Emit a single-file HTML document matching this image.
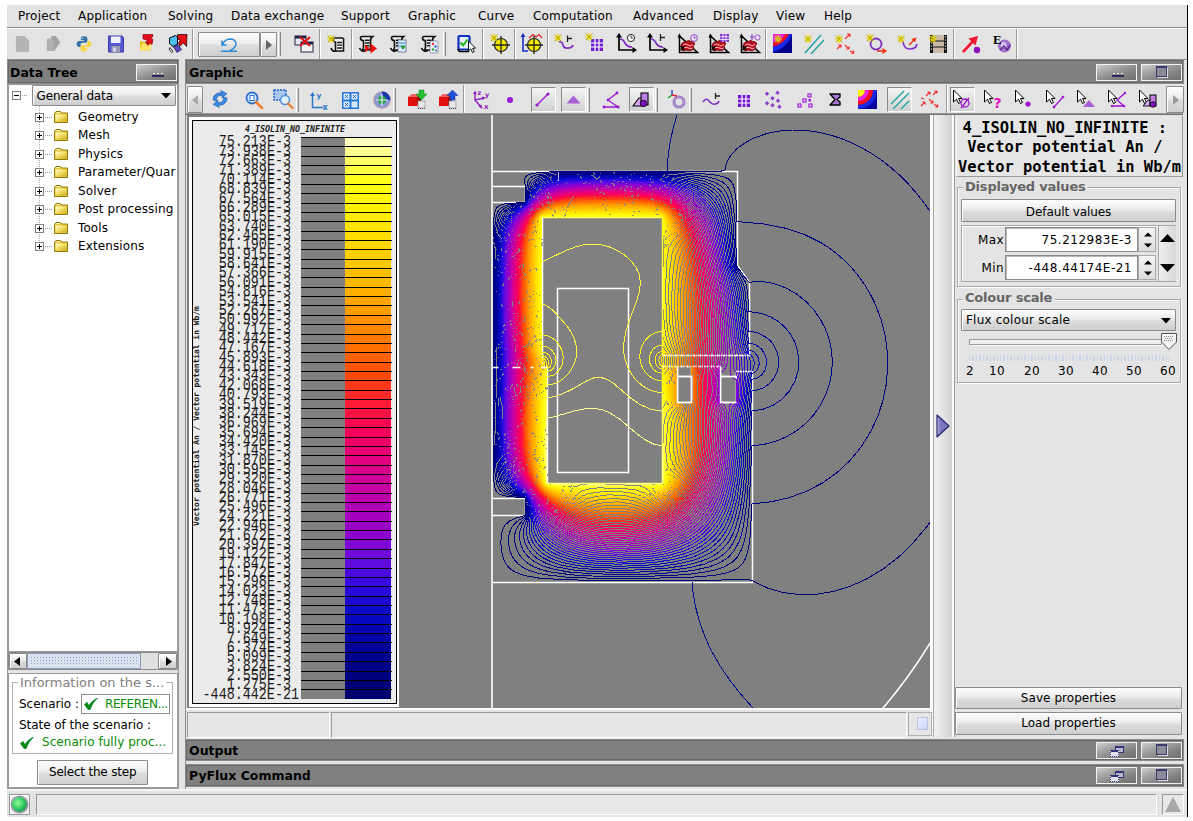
<!DOCTYPE html>
<html lang="en"><head><meta charset="utf-8"><title>Flux</title>
<style>
*{box-sizing:border-box;margin:0;padding:0}
html,body{width:1193px;height:821px;overflow:hidden;background:#fff}
body{position:relative;font-family:"DejaVu Sans","Liberation Sans",sans-serif;font-size:12px;color:#000;-webkit-font-smoothing:antialiased}
.a{position:absolute}
.t{position:absolute;white-space:nowrap;line-height:14px}
.b{font-weight:bold}
#app{position:absolute;left:7px;top:5px;width:1180px;height:812px;background:#e3e3e3}
.hdr{position:absolute;background:#808080;border:1px solid #696969;box-shadow:0 0 0 1px #8c8c8c}
.hdr .t{font-weight:bold;font-size:12.5px;line-height:16px}
.btn{position:absolute;border:1px solid #8a8a8a;border-radius:1px;background:linear-gradient(#fdfdfd 0%,#ececec 45%,#dcdcdc 55%,#cfcfcf 100%);box-shadow:inset 1px 1px 0 #fff}
.hbtn{position:absolute;border:1px solid #f2f2f2;background:linear-gradient(160deg,#cecece 0%,#a2a2a2 35%,#808080 70%,#6e6e6e 100%)}
.fld{position:absolute;background:#fff;border:1px solid #8a8a8a;box-shadow:inset 1px 1px 0 #b8b8b8}
.sep{position:absolute;width:2px;border-left:1px solid #9a9a9a;border-right:1px solid #fff}
</style></head>
<body>
<div id="app"></div>
<div class="a" style="left:7px;top:59px;width:172px;height:730px;border:1px solid #9a9a9a;background:#e4e4e4"></div>
<div class="a" style="left:185px;top:59px;width:1002px;height:730px;border:1px solid #8a8a8a;border-bottom:none;border-right:none;background:#e4e4e4"></div>
<div class="a" style="left:7px;top:789px;width:1180px;height:2px;background:#f4f4f4"></div>
<div class="a" style="left:7px;top:5px;width:1180px;height:23px;background:#e3e3e3"></div>
<div class="a" style="left:1187px;top:5px;width:1px;height:812px;background:#000"></div>
<div class="a" style="left:7px;top:27px;width:1180px;height:1px;background:#8a8a8a"></div>
<div class="a" style="left:7px;top:28px;width:1180px;height:1px;background:#fbfbfb"></div>
<div class="t" style="left:18px;top:9px;letter-spacing:0.2px">Project</div>
<div class="t" style="left:78px;top:9px;letter-spacing:0.2px">Application</div>
<div class="t" style="left:168px;top:9px;letter-spacing:0.2px">Solving</div>
<div class="t" style="left:231px;top:9px;letter-spacing:0.2px">Data exchange</div>
<div class="t" style="left:341px;top:9px;letter-spacing:0.2px">Support</div>
<div class="t" style="left:408px;top:9px;letter-spacing:0.2px">Graphic</div>
<div class="t" style="left:478px;top:9px;letter-spacing:0.2px">Curve</div>
<div class="t" style="left:533px;top:9px;letter-spacing:0.2px">Computation</div>
<div class="t" style="left:633px;top:9px;letter-spacing:0.2px">Advanced</div>
<div class="t" style="left:713px;top:9px;letter-spacing:0.2px">Display</div>
<div class="t" style="left:776px;top:9px;letter-spacing:0.2px">View</div>
<div class="t" style="left:824px;top:9px;letter-spacing:0.2px">Help</div>
<div class="a" style="left:7px;top:29px;width:1180px;height:30px;background:#e3e3e3"></div>
<svg class="a" style="left:14px;top:34px" width="17" height="20" viewBox="0 0 18 21"><path d="M2 3.5Q2 2 3.5 2H11L16 7V17.5Q16 19 14.5 19H3.5Q2 19 2 17.5Z" fill="#b4b4b4"/></svg>
<svg class="a" style="left:45px;top:34px" width="17" height="19" viewBox="0 0 19 21"><path d="M2 6V19H11V8L8 5H3Z" fill="#b0b0b0"/><path d="M7 2H12L17 9L12 17H10V9L7 6Z" fill="#a4a4a4"/></svg>
<svg class="a" style="left:75px;top:35px" width="18" height="18" viewBox="0 0 20 21"><path d="M9.8 1.5C6.5 1.5 6.3 3 6.3 4V6.2H10V7H4.3C2.5 7 1.5 8.5 1.5 10.5S2.5 14 4.3 14H6V11.5C6 10 7 9 8.5 9H12C13.2 9 14 8.2 14 7V4C14 2.5 12.5 1.5 9.8 1.5Z" fill="#3872a4"/><circle cx="8" cy="3.8" r="0.8" fill="#fff"/><path d="M10.2 19.5C13.5 19.5 13.7 18 13.7 17V14.8H10V14H15.7C17.5 14 18.5 12.5 18.5 10.5S17.5 7 15.7 7H14V9.5C14 11 13 12 11.5 12H8C6.8 12 6 12.8 6 14V17C6 18.5 7.5 19.5 10.2 19.5Z" fill="#f6d545"/><circle cx="12" cy="17.2" r="0.8" fill="#fff"/></svg>
<svg class="a" style="left:107px;top:35px" width="18" height="18" viewBox="1 1 17 18"><path d="M2 2H15.5L17 3.5V18H2Z" fill="#5858d0" stroke="#3a3aa8" stroke-width="1"/><rect x="4.5" y="2.5" width="9.5" height="6.5" fill="#f0f0f8"/><rect x="5" y="12" width="8.5" height="6" fill="#9a9ab0"/><rect x="6.5" y="13.5" width="3" height="4" fill="#d8d8e8"/></svg>
<svg class="a" style="left:139px;top:34px" width="15" height="17" viewBox="0 0 14 17"><path d="M0.500 7.500H5L6.500 9.500H11V16.500H0.500Z" fill="#e8c020"/><path d="M0.500 16.500L2.500 9.500H12.500L10.500 16.500Z" fill="#fbe66a"/><path d="M3.500 0.500H13.500L13 3L11 4L13.500 5.500L12.500 10.500L10.500 9L8.500 11.500L6 8L8.500 6.500L3.500 5Z" fill="#e60a14" stroke="#7a0008" stroke-width="0.600"/></svg>
<svg class="a" style="left:168px;top:34px" width="20" height="19" viewBox="0 0 20 19"><path d="M1.500 4L7.500 1.500L9.500 3V10L5 12.500L1.500 9.500Z" fill="#4cc0f4" stroke="#000" stroke-width="1"/><path d="M5.500 13L10 10.500L13.500 15.500L9 18.500Z" fill="#5a48c0" stroke="#1a1a50" stroke-width="0.700"/><path d="M2 13.500L5 17.500L3.500 18.500L1 15Z" fill="#fff" stroke="#000" stroke-width="0.800"/><path d="M9.500 0.500H19L18.500 12.500L15.500 9L12 12L10.500 9L12.500 6L9.500 5Z" fill="#ea0a14" stroke="#000" stroke-width="0.700"/><path d="M15 10.500L17.500 14" stroke="#fff" stroke-width="1.200"/></svg>
<div class="sep" style="left:192px;top:29px;width:2px;height:30px;"></div>
<div class="btn" style="left:198px;top:32px;width:62px;height:25px;"></div>
<svg class="a" style="left:221px;top:38px" width="17" height="15" viewBox="0 0 17 15"><path d="M1 2.5V7H5.5M1.2 6.8Q4 1 9.5 1Q15 1.5 15 6Q14.500 10 9 12.500M0 13.300H16" fill="none" stroke="#2a8ad8" stroke-width="1.5"/></svg>
<div class="btn" style="left:260px;top:32px;width:17px;height:25px;"><svg class="a" style="left:5px;top:7px" width="6" height="10"><path d="M0 0V10L6 5Z" fill="#666"/></svg></div>
<div class="a" style="left:278px;top:32px;width:3px;height:24px;border-left:1px solid #fff;border-right:1px solid #8a8a8a;background:#d0d0d0"></div>
<svg class="a" style="left:294px;top:34px" width="20" height="19" viewBox="0 0 20 19"><rect x="1" y="2" width="11" height="9" fill="#e8e8f0" stroke="#224" stroke-width="1"/><rect x="1" y="2" width="11" height="2.5" fill="#224"/><rect x="7" y="8" width="12" height="10" fill="#f4f4f8" stroke="#224" stroke-width="1"/><rect x="7" y="8" width="12" height="2.5" fill="#224"/><path d="M6 3L16 12M16 3L6 12" stroke="#e01010" stroke-width="2"/></svg>
<div class="sep" style="left:319px;top:29px;width:2px;height:30px;"></div>
<svg class="a" style="left:326px;top:33px" width="20" height="20" viewBox="0 0 20 20"><path d="M9 5H16Q18.500 5.500 17.500 8V18H9.500V9Q7 9 7.500 6.500Q8 5 9 5Z" fill="#f4f4f4" stroke="#111" stroke-width="1.600"/><path d="M11 9.500H16M11 12.200H16M11 15H16" stroke="#111" stroke-width="1.300"/><path d="M5 15Q6 19 10 18" fill="none" stroke="#111" stroke-width="1.600"/><g stroke="#e8d800" stroke-width="1.2"><path d="M5 6m-4 0h8m-4 -4v8m-3 -7l6 6m0 -6l-6 6"/></g><g stroke="#555" stroke-width="0.6"><path d="M5 6m-3.5 -3.5l7 7m0 -7l-7 7" stroke-dasharray="1 1"/></g></svg>
<div class="sep" style="left:351px;top:29px;width:2px;height:30px;"></div>
<svg class="a" style="left:357px;top:34px" width="22" height="20" viewBox="0 0 22 20"><path d="M5 2.500H15.500Q13.500 4 13.500 6.500V16H5.500Q7 14 6.500 12V6.500Q4 6.500 3.500 4.500Q3.500 2.500 5 2.500Z" fill="#f4f4f4" stroke="#111" stroke-width="1.700"/><path d="M8 6.200H12.500M8 9H12.500M8 11.800H12.500" stroke="#111" stroke-width="1.400"/><path d="M2.500 14Q4.500 18.500 9 16.500" fill="none" stroke="#111" stroke-width="1.700"/><path d="M8 10.5L13 14.5L8 18.5Z" fill="#e81010"/><path d="M13.5 9.5L20 14.5L13.5 19.5Z" fill="#e81010"/></svg>
<svg class="a" style="left:388px;top:34px" width="20" height="20" viewBox="0 0 20 20"><path d="M5 2.500H15.500Q13.500 4 13.500 6.500V16H5.500Q7 14 6.500 12V6.500Q4 6.500 3.500 4.500Q3.500 2.500 5 2.500Z" fill="#f4f4f4" stroke="#111" stroke-width="1.700"/><path d="M8 6.200H12.500M8 9H12.500M8 11.800H12.500" stroke="#111" stroke-width="1.400"/><path d="M2.500 14Q4.500 18.500 9 16.500" fill="none" stroke="#111" stroke-width="1.700"/><rect x="10" y="6" width="8" height="12" fill="#d8e8ff" stroke="#446" stroke-width="0.6"/><path d="M11 9h6M11 12h6" stroke="#28a" stroke-width="1.2"/><path d="M13 12L15 15L17 12" fill="#2a2" stroke="#181" stroke-width="1"/></svg>
<svg class="a" style="left:419px;top:34px" width="22" height="20" viewBox="0 0 22 20"><path d="M5 2.500H15.500Q13.500 4 13.500 6.500V16H5.500Q7 14 6.500 12V6.500Q4 6.500 3.500 4.500Q3.500 2.500 5 2.500Z" fill="#f4f4f4" stroke="#111" stroke-width="1.700"/><path d="M8 6.200H12.500M8 9H12.500M8 11.800H12.500" stroke="#111" stroke-width="1.400"/><path d="M2.500 14Q4.500 18.500 9 16.500" fill="none" stroke="#111" stroke-width="1.700"/><rect x="11" y="7" width="8" height="12" rx="1.5" fill="#e8eef8" stroke="#668" stroke-width="0.6"/><circle cx="14" cy="10" r="1.2" fill="#e33"/><circle cx="16.5" cy="12.5" r="1.2" fill="#36c"/><circle cx="14" cy="15.5" r="1.2" fill="#2a2"/><circle cx="17" cy="16.5" r="1" fill="#36c"/></svg>
<div class="a" style="left:443px;top:32px;width:3px;height:24px;border-left:1px solid #fff;border-right:1px solid #8a8a8a;background:#d0d0d0"></div>
<svg class="a" style="left:457px;top:34px" width="20" height="20" viewBox="0 0 20 20"><rect x="1.500" y="2" width="11" height="13.500" rx="1" fill="#e8f0ff" stroke="#1030c0" stroke-width="2.200"/><path d="M0.500 15L2.500 17.500H12" stroke="#000" stroke-width="1.600" fill="none"/><path d="M3.500 8.500L6 11.500L10.500 5.500" fill="none" stroke="#18b818" stroke-width="2"/><path d="M11.500 7V17L13.800 14.800L15.500 18.500L17.300 17.700L15.600 14.200H18.500Z" fill="#fff" stroke="#000" stroke-width="0.900"/></svg>
<div class="sep" style="left:482px;top:29px;width:2px;height:30px;"></div>
<svg class="a" style="left:489px;top:33px" width="21" height="21" viewBox="0 0 21 21"><circle cx="12" cy="12" r="6.5" fill="#f4e800" stroke="#222" stroke-width="1.2"/><path d="M12 12m-9 0h18m-9 -9v18" stroke="#222" stroke-width="1.3"/><path d="M12 12m-6.5 0a6.5 6.5 0 0 1 6.5 -6.5v6.5z" fill="#222" opacity="0.0"/><g stroke="#e8d800" stroke-width="1.2"><path d="M5 5m-4 0h8m-4 -4v8m-3 -7l6 6m0 -6l-6 6"/></g><g stroke="#555" stroke-width="0.6"><path d="M5 5m-3.5 -3.5l7 7m0 -7l-7 7" stroke-dasharray="1 1"/></g></svg>
<div class="sep" style="left:514px;top:29px;width:2px;height:30px;"></div>
<svg class="a" style="left:520px;top:33px" width="23" height="21" viewBox="0 0 23 21"><path d="M3 3V18H8" fill="none" stroke="#1830c0" stroke-width="1.6"/><path d="M3 0L0.5 4H5.5Z" fill="#1830c0"/><path d="M9 5L13 1.5L16 4L19 1.5L22 5" fill="none" stroke="#e02020" stroke-width="1.2"/><circle cx="14" cy="12" r="6.5" fill="#f4e800" stroke="#222" stroke-width="1.2"/><path d="M14 12m-9 0h18m-9 -9v18" stroke="#222" stroke-width="1.3"/><path d="M14 12m-6.5 0a6.5 6.5 0 0 1 6.5 -6.5v6.5z" fill="#222" opacity="0.0"/></svg>
<div class="sep" style="left:547px;top:29px;width:2px;height:30px;"></div>
<svg class="a" style="left:553px;top:33px" width="21" height="20" viewBox="0 0 21 20"><path d="M6 9Q9 8 10 12T16 15Q19 15 20 12" fill="none" stroke="#8030c0" stroke-width="1.7"/><path d="M14.500 2.500V9M14.500 5.500H19" stroke="#222" stroke-width="1.300" fill="none"/><g stroke="#e8d800" stroke-width="1.2"><path d="M5 5m-4 0h8m-4 -4v8m-3 -7l6 6m0 -6l-6 6"/></g><g stroke="#555" stroke-width="0.6"><path d="M5 5m-3.5 -3.5l7 7m0 -7l-7 7" stroke-dasharray="1 1"/></g></svg>
<svg class="a" style="left:584px;top:33px" width="19" height="19" viewBox="0 0 19 19"><rect x="7" y="6" width="12" height="12" fill="#7020d0"/><path d="M11 6V18M15 6V18M7 10H19M7 14H19" stroke="#fff" stroke-width="1.2"/><g stroke="#e8d800" stroke-width="1.2"><path d="M5 4m-4 0h8m-4 -4v8m-3 -7l6 6m0 -6l-6 6"/></g><g stroke="#555" stroke-width="0.6"><path d="M5 4m-3.5 -3.5l7 7m0 -7l-7 7" stroke-dasharray="1 1"/></g></svg>
<svg class="a" style="left:615px;top:33px" width="23" height="21" viewBox="0 0 23 21"><path d="M4 3V17H19" fill="none" stroke="#000" stroke-width="1.7"/><path d="M4 0L1 4.5H7Z M22 17L17.5 14V20Z" fill="#000"/><path d="M5 6Q8 6 10 10T17 14" fill="none" stroke="#8030c0" stroke-width="1.7"/><circle cx="16" cy="5" r="3.6" fill="#fff" stroke="#222" stroke-width="1"/><path d="M16 2.5V5H18" stroke="#222" stroke-width="0.9" fill="none"/></svg>
<svg class="a" style="left:646px;top:33px" width="23" height="21" viewBox="0 0 23 21"><path d="M4 3V17H19" fill="none" stroke="#000" stroke-width="1.7"/><path d="M4 0L1 4.5H7Z M22 17L17.5 14V20Z" fill="#000"/><path d="M5 6Q8 6 10 10T17 14" fill="none" stroke="#8030c0" stroke-width="1.7"/><path d="M14.500 1V8M14.500 4.500H19" stroke="#222" stroke-width="1.300" fill="none"/></svg>
<svg class="a" style="left:677px;top:33px" width="22" height="21" viewBox="0 0 22 21"><path d="M2.500 3V19.500H20.500Z" fill="none" stroke="#000" stroke-width="1.500" stroke-linejoin="miter"/><path d="M2.500 0.500L0.500 4.500H4.500Z" fill="#000"/><path d="M4 13Q5 8 9 9Q11 6 14 8.500Q17 8 18 11L16 13Q18 15 15.500 17Q12 18.500 9 17Q6 19 4.500 17Z" fill="#b80f1e" stroke="#700810" stroke-width="0.800"/><path d="M6 12Q9 10 11 12T16 11.500M6.500 15Q9 13.500 11.500 15T15.500 15" fill="none" stroke="#ffd0d0" stroke-width="0.900"/><path d="M3.500 13L7.500 17M7.500 13L3.500 17" stroke="#000" stroke-width="1.200"/><circle cx="17" cy="5" r="3.4" fill="#f0e0ff" stroke="#9040c0" stroke-width="1"/><path d="M17 3V5H19" stroke="#9040c0" stroke-width="0.9" fill="none"/></svg>
<svg class="a" style="left:708px;top:33px" width="22" height="21" viewBox="0 0 22 21"><path d="M2.500 3V19.500H20.500Z" fill="none" stroke="#000" stroke-width="1.500" stroke-linejoin="miter"/><path d="M2.500 0.500L0.500 4.500H4.500Z" fill="#000"/><path d="M4 13Q5 8 9 9Q11 6 14 8.500Q17 8 18 11L16 13Q18 15 15.500 17Q12 18.500 9 17Q6 19 4.500 17Z" fill="#b80f1e" stroke="#700810" stroke-width="0.800"/><path d="M6 12Q9 10 11 12T16 11.500M6.500 15Q9 13.500 11.500 15T15.500 15" fill="none" stroke="#ffd0d0" stroke-width="0.900"/><path d="M3.500 13L7.500 17M7.500 13L3.500 17" stroke="#000" stroke-width="1.200"/><rect x="12" y="1" width="9" height="8" fill="#8030c0"/><path d="M15 1V9M18 1V9M12 3.7H21M12 6.4H21" stroke="#fff" stroke-width="0.8"/></svg>
<svg class="a" style="left:739px;top:33px" width="22" height="21" viewBox="0 0 22 21"><path d="M2.500 3V19.500H20.500Z" fill="none" stroke="#000" stroke-width="1.500" stroke-linejoin="miter"/><path d="M2.500 0.500L0.500 4.500H4.500Z" fill="#000"/><path d="M4 13Q5 8 9 9Q11 6 14 8.500Q17 8 18 11L16 13Q18 15 15.500 17Q12 18.500 9 17Q6 19 4.500 17Z" fill="#b80f1e" stroke="#700810" stroke-width="0.800"/><path d="M6 12Q9 10 11 12T16 11.500M6.500 15Q9 13.500 11.500 15T15.500 15" fill="none" stroke="#ffd0d0" stroke-width="0.900"/><path d="M3.500 13L7.500 17M7.500 13L3.500 17" stroke="#000" stroke-width="1.200"/><path d="M13 1V7M11 4H16" stroke="#9040c0" stroke-width="1.1" fill="none"/><circle cx="18.5" cy="4.5" r="2.6" fill="#f0e0ff" stroke="#9040c0" stroke-width="0.9"/></svg>
<div class="sep" style="left:765px;top:29px;width:2px;height:30px;"></div>
<svg class="a" style="left:772px;top:33px" width="20" height="20" viewBox="0 0 20 20"><rect x="1" y="1" width="19" height="19" fill="#000088"/><path d="M1 1H20A26 26 0 0 1 1 19Z" fill="#1828f0"/><path d="M1 1H17A22 22 0 0 1 1 13.500Z" fill="#e81028"/><path d="M1 1H13.500A16 16 0 0 1 1 9Z" fill="#f020e0"/><g stroke="#e8d800" stroke-width="1.2"><path d="M6 6m-4 0h8m-4 -4v8m-3 -7l6 6m0 -6l-6 6"/></g><g stroke="#555" stroke-width="0.6"><path d="M6 6m-3.5 -3.5l7 7m0 -7l-7 7" stroke-dasharray="1 1"/></g></svg>
<svg class="a" style="left:802px;top:33px" width="22" height="21" viewBox="0 0 22 21"><path d="M3 20L19 2M9 21L22 7" stroke="#20a0a0" stroke-width="1.5"/><g stroke="#e8d800" stroke-width="1.2"><path d="M6 6m-4 0h8m-4 -4v8m-3 -7l6 6m0 -6l-6 6"/></g><g stroke="#555" stroke-width="0.6"><path d="M6 6m-3.5 -3.5l7 7m0 -7l-7 7" stroke-dasharray="1 1"/></g></svg>
<svg class="a" style="left:834px;top:33px" width="22" height="21" viewBox="0 0 22 21"><g stroke="#f03030" stroke-width="1.2" fill="#f03030"><path d="M11 6L16 1M16 1h-3M16 1v3"/><path d="M3 16L7 12M7 12h-2.6M7 12v2.6"/><path d="M11 12L15 16M15 16h-2.6M15 16v-2.6"/><path d="M16 18L20 20M20 20l-2.6 0.5M20 20l-1 -2.4"/></g><g stroke="#e8d800" stroke-width="1.2"><path d="M5 6m-4 0h8m-4 -4v8m-3 -7l6 6m0 -6l-6 6"/></g><g stroke="#555" stroke-width="0.6"><path d="M5 6m-3.5 -3.5l7 7m0 -7l-7 7" stroke-dasharray="1 1"/></g></svg>
<svg class="a" style="left:865px;top:33px" width="23" height="22" viewBox="0 0 23 22"><circle cx="11" cy="11" r="5.5" fill="none" stroke="#8030c0" stroke-width="1.8"/><path d="M12 18H20" stroke="#f03010" stroke-width="1.6"/><path d="M22 18L17.5 15V21Z" fill="#f03010"/><g stroke="#e8d800" stroke-width="1.2"><path d="M5 5m-4 0h8m-4 -4v8m-3 -7l6 6m0 -6l-6 6"/></g><g stroke="#555" stroke-width="0.6"><path d="M5 5m-3.5 -3.5l7 7m0 -7l-7 7" stroke-dasharray="1 1"/></g></svg>
<svg class="a" style="left:896px;top:33px" width="23" height="21" viewBox="0 0 23 21"><path d="M7 9Q8 16 14 16T21 11" fill="none" stroke="#8030c0" stroke-width="1.7"/><path d="M13 12L19 6" stroke="#f03010" stroke-width="1.4"/><path d="M20.5 4.5L15.5 6L19 9.5Z" fill="#f03010"/><g stroke="#e8d800" stroke-width="1.2"><path d="M5 6m-4 0h8m-4 -4v8m-3 -7l6 6m0 -6l-6 6"/></g><g stroke="#555" stroke-width="0.6"><path d="M5 6m-3.5 -3.5l7 7m0 -7l-7 7" stroke-dasharray="1 1"/></g></svg>
<svg class="a" style="left:927px;top:33px" width="21" height="21" viewBox="0 0 21 21"><rect x="3" y="2" width="17" height="18" fill="#c8b8a8"/><rect x="3" y="2" width="3" height="18" fill="#111"/><rect x="17" y="2" width="3" height="18" fill="#111"/><path d="M3.8 4h1.4M3.8 7h1.4M3.8 10h1.4M3.8 13h1.4M3.8 16h1.4M17.8 4h1.4M17.8 7h1.4M17.8 10h1.4M17.8 13h1.4M17.8 16h1.4" stroke="#fff" stroke-width="1.2"/><path d="M6 8H17M6 14H17" stroke="#111" stroke-width="1"/><g stroke="#e8d800" stroke-width="1.2"><path d="M6 6m-4 0h8m-4 -4v8m-3 -7l6 6m0 -6l-6 6"/></g><g stroke="#555" stroke-width="0.6"><path d="M6 6m-3.5 -3.5l7 7m0 -7l-7 7" stroke-dasharray="1 1"/></g></svg>
<div class="sep" style="left:953px;top:29px;width:2px;height:30px;"></div>
<svg class="a" style="left:961px;top:34px" width="20" height="20" viewBox="0 0 20 20"><path d="M2 18L14 5" stroke="#f01830" stroke-width="2.6"/><path d="M17 2L7.5 4.5L14.5 11.5Z" fill="#f01830"/><circle cx="16" cy="16" r="3.2" fill="#9010c0"/></svg>
<svg class="a" style="left:992px;top:33px" width="21" height="21" viewBox="0 0 21 21"><circle cx="12.500" cy="13" r="6.500" fill="#a070c8"/><circle cx="11.5" cy="12" r="3" fill="#e8d8f8" opacity="0.8"/><path d="M8 17L12 13L15 17L18 12" stroke="#502080" stroke-width="1.2" fill="none"/></svg>
<div class="sep" style="left:1016px;top:29px;width:2px;height:30px;"></div>
<div class="t" style="left:993px;top:33px;font-family:'Liberation Serif',serif;font-weight:bold;font-size:13px;line-height:13px">E</div>
<div class="hdr" style="left:8px;top:60px;width:170px;height:23px"><div class="t" style="left:1px;top:4px">Data Tree</div></div>
<div class="hbtn" style="left:136px;top:64px;width:41px;height:17px;"><div class="a" style="left:15px;top:10px;width:12px;height:2px;background:#2a2a5e"></div><div class="a" style="left:16px;top:8px;width:10px;height:1px;background:repeating-linear-gradient(90deg,#eee 0 2px,transparent 2px 4px)"></div></div>
<div class="hdr" style="left:186px;top:60px;width:997px;height:23px"><div class="t" style="left:2px;top:4px">Graphic</div></div>
<div class="hbtn" style="left:1096px;top:64px;width:41px;height:17px;"><div class="a" style="left:15px;top:10px;width:12px;height:2px;background:#2a2a5e"></div><div class="a" style="left:16px;top:8px;width:10px;height:1px;background:repeating-linear-gradient(90deg,#eee 0 2px,transparent 2px 4px)"></div></div>
<div class="hbtn" style="left:1141px;top:64px;width:41px;height:17px;"><div class="a" style="left:14px;top:1px;width:11px;height:11px;border:1.5px solid #3a3a6e;border-top-width:2.5px;background:#8c8c98;box-shadow:1.5px 1.5px 0 -0.5px #ddd"></div></div>
<div class="hdr" style="left:186px;top:740px;width:997px;height:20px"><div class="t" style="left:2px;top:2px">Output</div></div>
<div class="hdr" style="left:186px;top:765px;width:997px;height:21px"><div class="t" style="left:2px;top:2px">PyFlux Command</div></div>
<div class="hbtn" style="left:1096px;top:742px;width:41px;height:17px;"><div class="a" style="left:18px;top:3px;width:9px;height:7px;border:1px solid #33337a;border-top:2px solid #33337a;background:#b8b8c8"></div><div class="a" style="left:13px;top:7px;width:9px;height:7px;border:1px dotted #33337a;border-top:2px solid #33337a;background:#e0e0e8"></div></div>
<div class="hbtn" style="left:1141px;top:742px;width:41px;height:17px;"><div class="a" style="left:14px;top:1px;width:11px;height:11px;border:1.5px solid #3a3a6e;border-top-width:2.5px;background:#8c8c98;box-shadow:1.5px 1.5px 0 -0.5px #ddd"></div></div>
<div class="hbtn" style="left:1096px;top:767px;width:41px;height:17px;"><div class="a" style="left:18px;top:3px;width:9px;height:7px;border:1px solid #33337a;border-top:2px solid #33337a;background:#b8b8c8"></div><div class="a" style="left:13px;top:7px;width:9px;height:7px;border:1px dotted #33337a;border-top:2px solid #33337a;background:#e0e0e8"></div></div>
<div class="hbtn" style="left:1141px;top:767px;width:41px;height:17px;"><div class="a" style="left:14px;top:1px;width:11px;height:11px;border:1.5px solid #3a3a6e;border-top-width:2.5px;background:#8c8c98;box-shadow:1.5px 1.5px 0 -0.5px #ddd"></div></div>
<div class="a" style="left:8px;top:84px;width:170px;height:568px;background:#fff;border:1px solid #9a9a9a"></div>
<div class="a" style="left:12px;top:91px;width:9px;height:9px;border:1px solid #808080;background:#fff"></div>
<div class="a" style="left:14px;top:95px;width:5px;height:1px;background:#000"></div>
<div class="a" style="left:22px;top:95px;width:6px;height:1px;background:repeating-linear-gradient(90deg,#999 0 1px,transparent 1px 2px)"></div>
<div class="btn" style="left:32px;top:85px;width:144px;height:21px;"></div>
<div class="t" style="left:36.5px;top:89px;letter-spacing:-0.15px">General data</div>
<svg class="a" style="left:161px;top:93px" width="10" height="6"><path d="M0 0H10L5 5.5Z" fill="#000"/></svg>
<div class="a" style="left:39px;top:106px;width:1px;height:140px;background:repeating-linear-gradient(180deg,#aaa 0 1px,transparent 1px 2px)"></div>
<div class="a" style="left:35px;top:113px;width:9px;height:9px;border:1px solid #808080;background:#fff"></div>
<div class="a" style="left:37px;top:117px;width:5px;height:1px;background:#000"></div>
<div class="a" style="left:39px;top:115px;width:1px;height:5px;background:#000"></div>
<div class="a" style="left:45px;top:117px;width:7px;height:1px;background:repeating-linear-gradient(90deg,#999 0 1px,transparent 1px 2px)"></div>
<svg class="a" style="left:53px;top:110px" width="16" height="13" viewBox="0 0 16 13"><defs><linearGradient id="fg0" x1="0" y1="0" x2="1" y2="1"><stop offset="0" stop-color="#fffde0"/><stop offset="0.45" stop-color="#f6e268"/><stop offset="1" stop-color="#c9a81c"/></linearGradient></defs><path d="M1.500 3.500 L3 1.500 H7.500 L9 3 H14.500 V12.500 H1.500 Z" fill="#e6c83a" stroke="#8f7d12" stroke-width="1"/><path d="M2.500 4.500 H13.500 V11.500 H2.500 Z" fill="url(#fg0)"/><path d="M3.500 2.500H7" stroke="#fff8c0" stroke-width="1"/></svg>
<div class="t" style="left:78px;top:110px;letter-spacing:0.12px">Geometry</div>
<div class="a" style="left:35px;top:131px;width:9px;height:9px;border:1px solid #808080;background:#fff"></div>
<div class="a" style="left:37px;top:135px;width:5px;height:1px;background:#000"></div>
<div class="a" style="left:39px;top:133px;width:1px;height:5px;background:#000"></div>
<div class="a" style="left:45px;top:135px;width:7px;height:1px;background:repeating-linear-gradient(90deg,#999 0 1px,transparent 1px 2px)"></div>
<svg class="a" style="left:53px;top:128px" width="16" height="13" viewBox="0 0 16 13"><defs><linearGradient id="fg1" x1="0" y1="0" x2="1" y2="1"><stop offset="0" stop-color="#fffde0"/><stop offset="0.45" stop-color="#f6e268"/><stop offset="1" stop-color="#c9a81c"/></linearGradient></defs><path d="M1.500 3.500 L3 1.500 H7.500 L9 3 H14.500 V12.500 H1.500 Z" fill="#e6c83a" stroke="#8f7d12" stroke-width="1"/><path d="M2.500 4.500 H13.500 V11.500 H2.500 Z" fill="url(#fg1)"/><path d="M3.500 2.500H7" stroke="#fff8c0" stroke-width="1"/></svg>
<div class="t" style="left:78px;top:128px;letter-spacing:0.12px">Mesh</div>
<div class="a" style="left:35px;top:150px;width:9px;height:9px;border:1px solid #808080;background:#fff"></div>
<div class="a" style="left:37px;top:154px;width:5px;height:1px;background:#000"></div>
<div class="a" style="left:39px;top:152px;width:1px;height:5px;background:#000"></div>
<div class="a" style="left:45px;top:154px;width:7px;height:1px;background:repeating-linear-gradient(90deg,#999 0 1px,transparent 1px 2px)"></div>
<svg class="a" style="left:53px;top:147px" width="16" height="13" viewBox="0 0 16 13"><defs><linearGradient id="fg2" x1="0" y1="0" x2="1" y2="1"><stop offset="0" stop-color="#fffde0"/><stop offset="0.45" stop-color="#f6e268"/><stop offset="1" stop-color="#c9a81c"/></linearGradient></defs><path d="M1.500 3.500 L3 1.500 H7.500 L9 3 H14.500 V12.500 H1.500 Z" fill="#e6c83a" stroke="#8f7d12" stroke-width="1"/><path d="M2.500 4.500 H13.500 V11.500 H2.500 Z" fill="url(#fg2)"/><path d="M3.500 2.500H7" stroke="#fff8c0" stroke-width="1"/></svg>
<div class="t" style="left:78px;top:147px;letter-spacing:0.12px">Physics</div>
<div class="a" style="left:35px;top:168px;width:9px;height:9px;border:1px solid #808080;background:#fff"></div>
<div class="a" style="left:37px;top:172px;width:5px;height:1px;background:#000"></div>
<div class="a" style="left:39px;top:170px;width:1px;height:5px;background:#000"></div>
<div class="a" style="left:45px;top:172px;width:7px;height:1px;background:repeating-linear-gradient(90deg,#999 0 1px,transparent 1px 2px)"></div>
<svg class="a" style="left:53px;top:165px" width="16" height="13" viewBox="0 0 16 13"><defs><linearGradient id="fg3" x1="0" y1="0" x2="1" y2="1"><stop offset="0" stop-color="#fffde0"/><stop offset="0.45" stop-color="#f6e268"/><stop offset="1" stop-color="#c9a81c"/></linearGradient></defs><path d="M1.500 3.500 L3 1.500 H7.500 L9 3 H14.500 V12.500 H1.500 Z" fill="#e6c83a" stroke="#8f7d12" stroke-width="1"/><path d="M2.500 4.500 H13.500 V11.500 H2.500 Z" fill="url(#fg3)"/><path d="M3.500 2.500H7" stroke="#fff8c0" stroke-width="1"/></svg>
<div class="t" style="left:78px;top:165px;letter-spacing:0.12px">Parameter/Quar</div>
<div class="a" style="left:35px;top:187px;width:9px;height:9px;border:1px solid #808080;background:#fff"></div>
<div class="a" style="left:37px;top:191px;width:5px;height:1px;background:#000"></div>
<div class="a" style="left:39px;top:189px;width:1px;height:5px;background:#000"></div>
<div class="a" style="left:45px;top:191px;width:7px;height:1px;background:repeating-linear-gradient(90deg,#999 0 1px,transparent 1px 2px)"></div>
<svg class="a" style="left:53px;top:184px" width="16" height="13" viewBox="0 0 16 13"><defs><linearGradient id="fg4" x1="0" y1="0" x2="1" y2="1"><stop offset="0" stop-color="#fffde0"/><stop offset="0.45" stop-color="#f6e268"/><stop offset="1" stop-color="#c9a81c"/></linearGradient></defs><path d="M1.500 3.500 L3 1.500 H7.500 L9 3 H14.500 V12.500 H1.500 Z" fill="#e6c83a" stroke="#8f7d12" stroke-width="1"/><path d="M2.500 4.500 H13.500 V11.500 H2.500 Z" fill="url(#fg4)"/><path d="M3.500 2.500H7" stroke="#fff8c0" stroke-width="1"/></svg>
<div class="t" style="left:78px;top:184px;letter-spacing:0.12px">Solver</div>
<div class="a" style="left:35px;top:205px;width:9px;height:9px;border:1px solid #808080;background:#fff"></div>
<div class="a" style="left:37px;top:209px;width:5px;height:1px;background:#000"></div>
<div class="a" style="left:39px;top:207px;width:1px;height:5px;background:#000"></div>
<div class="a" style="left:45px;top:209px;width:7px;height:1px;background:repeating-linear-gradient(90deg,#999 0 1px,transparent 1px 2px)"></div>
<svg class="a" style="left:53px;top:202px" width="16" height="13" viewBox="0 0 16 13"><defs><linearGradient id="fg5" x1="0" y1="0" x2="1" y2="1"><stop offset="0" stop-color="#fffde0"/><stop offset="0.45" stop-color="#f6e268"/><stop offset="1" stop-color="#c9a81c"/></linearGradient></defs><path d="M1.500 3.500 L3 1.500 H7.500 L9 3 H14.500 V12.500 H1.500 Z" fill="#e6c83a" stroke="#8f7d12" stroke-width="1"/><path d="M2.500 4.500 H13.500 V11.500 H2.500 Z" fill="url(#fg5)"/><path d="M3.500 2.500H7" stroke="#fff8c0" stroke-width="1"/></svg>
<div class="t" style="left:78px;top:202px;letter-spacing:0.12px">Post processing</div>
<div class="a" style="left:35px;top:224px;width:9px;height:9px;border:1px solid #808080;background:#fff"></div>
<div class="a" style="left:37px;top:228px;width:5px;height:1px;background:#000"></div>
<div class="a" style="left:39px;top:226px;width:1px;height:5px;background:#000"></div>
<div class="a" style="left:45px;top:228px;width:7px;height:1px;background:repeating-linear-gradient(90deg,#999 0 1px,transparent 1px 2px)"></div>
<svg class="a" style="left:53px;top:221px" width="16" height="13" viewBox="0 0 16 13"><defs><linearGradient id="fg6" x1="0" y1="0" x2="1" y2="1"><stop offset="0" stop-color="#fffde0"/><stop offset="0.45" stop-color="#f6e268"/><stop offset="1" stop-color="#c9a81c"/></linearGradient></defs><path d="M1.500 3.500 L3 1.500 H7.500 L9 3 H14.500 V12.500 H1.500 Z" fill="#e6c83a" stroke="#8f7d12" stroke-width="1"/><path d="M2.500 4.500 H13.500 V11.500 H2.500 Z" fill="url(#fg6)"/><path d="M3.500 2.500H7" stroke="#fff8c0" stroke-width="1"/></svg>
<div class="t" style="left:78px;top:221px;letter-spacing:0.12px">Tools</div>
<div class="a" style="left:35px;top:242px;width:9px;height:9px;border:1px solid #808080;background:#fff"></div>
<div class="a" style="left:37px;top:246px;width:5px;height:1px;background:#000"></div>
<div class="a" style="left:39px;top:244px;width:1px;height:5px;background:#000"></div>
<div class="a" style="left:45px;top:246px;width:7px;height:1px;background:repeating-linear-gradient(90deg,#999 0 1px,transparent 1px 2px)"></div>
<svg class="a" style="left:53px;top:239px" width="16" height="13" viewBox="0 0 16 13"><defs><linearGradient id="fg7" x1="0" y1="0" x2="1" y2="1"><stop offset="0" stop-color="#fffde0"/><stop offset="0.45" stop-color="#f6e268"/><stop offset="1" stop-color="#c9a81c"/></linearGradient></defs><path d="M1.500 3.500 L3 1.500 H7.500 L9 3 H14.500 V12.500 H1.500 Z" fill="#e6c83a" stroke="#8f7d12" stroke-width="1"/><path d="M2.500 4.500 H13.500 V11.500 H2.500 Z" fill="url(#fg7)"/><path d="M3.500 2.500H7" stroke="#fff8c0" stroke-width="1"/></svg>
<div class="t" style="left:78px;top:239px;letter-spacing:0.12px">Extensions</div>
<div class="a" style="left:177px;top:85px;width:1px;height:566px;background:#9a9a9a"></div>
<div class="a" style="left:8px;top:652px;width:170px;height:18px;background:#e0e0e0;border:1px solid #8a8a8a"></div>
<div class="btn" style="left:9px;top:653px;width:18px;height:16px;"><svg class="a" style="left:4px;top:3px" width="6" height="9"><path d="M6 0V9L0 4.5Z" fill="#000"/></svg></div>
<div class="btn" style="left:158px;top:653px;width:19px;height:16px;"><svg class="a" style="left:7px;top:3px" width="6" height="9"><path d="M0 0V9L6 4.5Z" fill="#000"/></svg></div>
<div class="a" style="left:27px;top:653px;width:114px;height:16px;border:1px solid #8a9ab8;background:#d8e2f0;"><div class="a" style="left:2px;top:2px;right:3px;bottom:2px;background-image:radial-gradient(#8fa0c0 0.7px,transparent 0.9px);background-size:3px 3px"></div></div>
<div class="a" style="left:8px;top:673px;width:170px;height:115px;background:#fff;border:1px solid #9a9a9a"></div>
<div class="a" style="left:12px;top:682px;width:161px;height:72px;border:1px solid #b0b0b0"></div>
<div class="a" style="left:18px;top:676px;width:148px;height:14px;background:#fff"></div>
<div class="t" style="left:20px;top:676px;color:#808080;font-size:13px">Information on the s...</div>
<div class="t" style="left:19px;top:697px;">Scenario :</div>
<div class="a" style="left:81px;top:694px;width:89px;height:20px;border:1px solid #8a8a8a;background:#fff"></div>
<svg class="a" style="left:84px;top:698px" width="14" height="12" viewBox="0 0 14 12"><path d="M0.3 6.5 L3 4.2 L5 7.500 C7 4 10 1.500 13.700 0 C10 3.500 7.500 7.500 6.200 11.800 H4.200 Z" fill="#0a8a0a" stroke="#075" stroke-width="0.5"/></svg>
<div class="t" style="left:105px;top:697px;color:#0a8a0a;letter-spacing:-0.4px">REFEREN...</div>
<div class="t" style="left:19px;top:718px;letter-spacing:-0.05px">State of the scenario :</div>
<svg class="a" style="left:20px;top:737px" width="14" height="12" viewBox="0 0 14 12"><path d="M0.3 6.5 L3 4.2 L5 7.500 C7 4 10 1.500 13.700 0 C10 3.500 7.500 7.500 6.200 11.800 H4.200 Z" fill="#0a8a0a" stroke="#075" stroke-width="0.5"/></svg>
<div class="t" style="left:42px;top:735px;color:#0a8a0a;letter-spacing:0.05px">Scenario fully proc...</div>
<div class="btn" style="left:37px;top:760px;width:111px;height:25px;"></div>
<div class="t" style="left:49px;top:765px;letter-spacing:-0.2px">Select the step</div>
<div class="a" style="left:9px;top:794px;width:21px;height:21px;border:1px solid #999;background:#eee;box-shadow:inset 1px 1px 0 #fff"><div class="a" style="left:2px;top:2px;width:15px;height:15px;border-radius:50%;background:radial-gradient(circle at 40% 40%,#9f9 0%,#3c6 45%,#164 100%);box-shadow:0 0 0 1.5px #a090a8"></div></div>
<div class="a" style="left:36px;top:794px;width:1121px;height:21px;border:1px solid #999;border-right-color:#fff;border-bottom-color:#fff;background:#e8e8e8"></div>
<div class="a" style="left:1162px;top:794px;width:22px;height:21px;border:1px solid #999;border-right-color:#fff;border-bottom-color:#fff;background:#e8e8e8"><svg class="a" style="left:1px;top:1px" width="18" height="17"><path d="M9 1L17 16H1Z" fill="#a8a8a8"/></svg></div>
<div class="a" style="left:186px;top:84px;width:997px;height:30px;background:#e3e3e3"></div>
<div class="a" style="left:186px;top:113px;width:997px;height:1px;background:#9a9a9a"></div>
<div class="a" style="left:186px;top:114px;width:997px;height:1px;background:#707070"></div>
<div class="btn" style="left:187px;top:86px;width:16px;height:27px;"><svg class="a" style="left:4px;top:8px" width="6" height="10"><path d="M6 0V10L0 5Z" fill="#aaa"/></svg></div>
<div class="btn" style="left:1166px;top:86px;width:18px;height:27px;"><svg class="a" style="left:6px;top:8px" width="6" height="10"><path d="M0 0V10L6 5Z" fill="#999"/></svg></div>
<svg class="a" style="left:210px;top:89px" width="20" height="20" viewBox="0 0 20 20"><path d="M3 11C3 6 7 3 12 4L10.5 1.5L17 4.5L12 9L12.2 6.5C8 6 6 8.5 6.5 12Z" fill="#3a88e0" stroke="#1a58b0" stroke-width="0.6"/><path d="M17 9C17 14 13 17 8 16L9.5 18.5L3 15.5L8 11L7.8 13.5C12 14 14 11.500 13.500 8Z" fill="#3a88e0" stroke="#1a58b0" stroke-width="0.6"/></svg>
<svg class="a" style="left:244px;top:90px" width="20" height="20" viewBox="0 0 20 20"><circle cx="8" cy="8" r="5.5" fill="#d8ecff" stroke="#3070c8" stroke-width="1.8"/><rect x="6" y="5.500" width="4" height="5" fill="#fff" stroke="#3070c8" stroke-width="1"/><path d="M12 12L18 18" stroke="#f08030" stroke-width="2.6" stroke-linecap="round"/></svg>
<svg class="a" style="left:273px;top:89px" width="21" height="21" viewBox="0 0 21 21"><rect x="1" y="1" width="12" height="10" fill="#a8c8f0" stroke="#2060c0" stroke-width="1.4" stroke-dasharray="2 1"/><circle cx="12" cy="11" r="4.500" fill="#e0f0ff" stroke="#5090d8" stroke-width="1.5"/><path d="M15 14.500L19.500 19" stroke="#f08030" stroke-width="2.4" stroke-linecap="round"/></svg>
<div class="a" style="left:296px;top:88px;width:3px;height:24px;border-left:1px solid #fff;border-right:1px solid #8a8a8a;background:#d0d0d0"></div>
<svg class="a" style="left:309px;top:91px" width="20" height="20" viewBox="0 0 20 20"><path d="M3.500 4V16.500H14" fill="none" stroke="#2878c8" stroke-width="1.500"/><path d="M3.500 1L1 5H6Z" fill="#2878c8"/><text x="13.500" y="19" font-size="8" fill="#2878c8" font-family="DejaVu Sans,Liberation Sans,sans-serif" font-weight="bold">x</text><text x="7.500" y="7" font-size="7.500" fill="#2878c8" font-family="DejaVu Sans,Liberation Sans,sans-serif" font-weight="bold">y</text></svg>
<svg class="a" style="left:341px;top:91px" width="19" height="19" viewBox="0 0 19 19"><rect x="1" y="1" width="17" height="17" fill="#2878d8"/><rect x="2.500" y="2.500" width="6" height="6" fill="#d8e8ff"/><rect x="10.500" y="2.500" width="6" height="6" fill="#d8e8ff"/><rect x="2.500" y="10.500" width="6" height="6" fill="#d8e8ff"/><rect x="10.500" y="10.500" width="6" height="6" fill="#d8e8ff"/><path d="M4 4l3 3m0-3l-3 3M12 4l3 3m0-3l-3 3M4 12l3 3m0-3l-3 3" stroke="#2060b0" stroke-width="0.9"/></svg>
<svg class="a" style="left:372px;top:90px" width="20" height="20" viewBox="0 0 20 20"><circle cx="10" cy="10" r="8.500" fill="#8898d0" stroke="#d8a8a8" stroke-width="1"/><path d="M10 1.500A8.500 8.500 0 0 1 18.500 10H10Z" fill="#1838b0"/><circle cx="10" cy="10" r="4" fill="#28a838"/><path d="M10 4V16M4 10H16" stroke="#e8e8ff" stroke-width="1.2"/></svg>
<div class="a" style="left:393px;top:88px;width:3px;height:24px;border-left:1px solid #fff;border-right:1px solid #8a8a8a;background:#d0d0d0"></div>
<svg class="a" style="left:407px;top:89px" width="21" height="21" viewBox="0 0 21 21"><path d="M1 8L5 5H14L10 8Z" fill="#f06060"/><path d="M1 8H10V17H1Z" fill="#e01010"/><path d="M10 8L14 5V14L10 17Z" fill="#a00808"/><rect x="11" y="12" width="7" height="7" fill="#e8e8e8" stroke="#888" stroke-width="0.6"/><path d="M11 19.500H18" stroke="#446" stroke-width="1" stroke-dasharray="1 1"/><path d="M12 1H17V5H20L14.500 11L9 5H12Z" fill="#20c030" stroke="#108018" stroke-width="0.5"/></svg>
<svg class="a" style="left:438px;top:89px" width="21" height="21" viewBox="0 0 21 21"><path d="M1 8L5 5H14L10 8Z" fill="#f06060"/><path d="M1 8H10V17H1Z" fill="#e01010"/><path d="M10 8L14 5V14L10 17Z" fill="#a00808"/><rect x="11" y="12" width="7" height="7" fill="#e8e8e8" stroke="#888" stroke-width="0.6"/><path d="M11 19.500H18" stroke="#446" stroke-width="1" stroke-dasharray="1 1"/><path d="M12 11H17V6.500H20L14.500 1L9 6.500H12Z" fill="#2050e0" stroke="#1030a0" stroke-width="0.5"/></svg>
<div class="sep" style="left:463px;top:85px;width:2px;height:28px;"></div>
<svg class="a" style="left:471px;top:90px" width="20" height="20" viewBox="0 0 20 20"><path d="M4 3V10L13 8M4 10L10 17" fill="none" stroke="#9020c0" stroke-width="1.400"/><path d="M4 0.500L2 4H6ZM15 7.500L11 6.500L11.500 10ZM11.500 19L7.500 16.500L10.500 14.500Z" fill="#9020c0"/><text x="6.500" y="5" font-size="6.500" fill="#9020c0" font-family="DejaVu Sans,Liberation Sans,sans-serif" font-weight="bold">z</text><text x="14" y="7" font-size="6.500" fill="#9020c0" font-family="DejaVu Sans,Liberation Sans,sans-serif" font-weight="bold">y</text><text x="13" y="19" font-size="7" fill="#9020c0" font-family="DejaVu Sans,Liberation Sans,sans-serif" font-weight="bold">x</text></svg>
<svg class="a" style="left:500px;top:90px" width="20" height="20" viewBox="0 0 20 20"><circle cx="10" cy="10" r="3" fill="#9a18d0"/></svg>
<div class="a" style="left:531px;top:87px;width:25px;height:25px;border:1px solid #fff;border-top-color:#8a8a8a;border-left-color:#8a8a8a;background:linear-gradient(#f4f4f4,#d0d0d0)"></div>
<svg class="a" style="left:533px;top:90px" width="19" height="19" viewBox="0 0 19 19"><path d="M4 15L15 4" stroke="#9a18d0" stroke-width="1.4"/><circle cx="4" cy="15" r="1.600" fill="#9a18d0"/><circle cx="15" cy="4" r="1.600" fill="#9a18d0"/></svg>
<div class="a" style="left:561px;top:87px;width:25px;height:25px;border:1px solid #fff;border-top-color:#8a8a8a;border-left-color:#8a8a8a;background:linear-gradient(#f4f4f4,#d0d0d0)"></div>
<svg class="a" style="left:565px;top:91px" width="17" height="17" viewBox="0 0 17 17"><path d="M1.500 12.500L8.500 4.500L15.500 12.500Z" fill="#a860d8"/></svg>
<div class="a" style="left:587px;top:88px;width:3px;height:24px;border-left:1px solid #fff;border-right:1px solid #8a8a8a;background:#d0d0d0"></div>
<svg class="a" style="left:602px;top:91px" width="20" height="20" viewBox="0 0 20 20"><path d="M15 2L6 9L16 16H2" fill="none" stroke="#9a18d0" stroke-width="1.300"/><circle cx="15" cy="2" r="1.400" fill="#9a18d0"/><circle cx="6" cy="9" r="1.400" fill="#9a18d0"/><circle cx="16" cy="16" r="1.400" fill="#9a18d0"/><circle cx="2" cy="16" r="1.400" fill="#9a18d0"/></svg>
<div class="a" style="left:629px;top:87px;width:25px;height:25px;border:1px solid #fff;border-top-color:#8a8a8a;border-left-color:#8a8a8a;background:linear-gradient(#f4f4f4,#d0d0d0)"></div>
<svg class="a" style="left:632px;top:91px" width="19" height="19" viewBox="0 0 19 19"><path d="M1 15L7 7H10V15Z" fill="#d8a8f0" stroke="#000" stroke-width="1.100"/><rect x="9" y="2" width="7" height="12" fill="#c080e8" stroke="#000" stroke-width="1.100"/><circle cx="11.500" cy="12.500" r="3.200" fill="#8010c0" stroke="#000" stroke-width="0.800"/></svg>
<div class="a" style="left:655px;top:88px;width:3px;height:24px;border-left:1px solid #fff;border-right:1px solid #8a8a8a;background:#d0d0d0"></div>
<svg class="a" style="left:667px;top:89px" width="20" height="20" viewBox="0 0 20 20"><circle cx="12" cy="13" r="5" fill="none" stroke="#a080c8" stroke-width="3.200"/><circle cx="12" cy="13" r="5" fill="none" stroke="#c8b0e0" stroke-width="1" stroke-dasharray="2 1.500"/><path d="M5 1V6" stroke="#2040e0" stroke-width="1.400"/><path d="M5 6L1 9" stroke="#20a020" stroke-width="1.400"/><path d="M5 6L10 7" stroke="#e02020" stroke-width="1.400"/></svg>
<div class="a" style="left:689px;top:88px;width:3px;height:24px;border-left:1px solid #fff;border-right:1px solid #8a8a8a;background:#d0d0d0"></div>
<svg class="a" style="left:702px;top:91px" width="20" height="20" viewBox="0 0 20 20"><path d="M1 11Q4 6 7 10T13 13Q16 13 17 10" fill="none" stroke="#8030c0" stroke-width="1.600"/><path d="M13.500 2V8M13.500 5H18" stroke="#222" stroke-width="1.300" fill="none"/></svg>
<svg class="a" style="left:736px;top:92px" width="16" height="18" viewBox="0 0 16 18"><rect x="2" y="3" width="12" height="12" fill="#7018d8"/><path d="M6 3V15M10 3V15M2 7H14M2 11H14" stroke="#fff" stroke-width="1.200"/></svg>
<svg class="a" style="left:764px;top:90px" width="20" height="20" viewBox="0 0 20 20"><g fill="#9040c8"><path d="M3 1.500l2.200 2.200-2.200 2.200-2.200-2.200zM13.500 0.500l2.200 2.200-2.200 2.200-2.200-2.200zM8.500 6l2.200 2.200-2.200 2.200-2.200-2.200zM14 8.500l2.200 2.200-2.200 2.200-2.200-2.200zM3 11l2.200 2.200-2.200 2.200-2.200-2.200zM8.500 13l2.200 2.200-2.200 2.200-2.200-2.200zM15.500 14.500l2.200 2.200-2.200 2.200-2.200-2.200z"/></g></svg>
<svg class="a" style="left:797px;top:92px" width="17" height="17" viewBox="0 0 17 17"><g fill="none" stroke="#a020e0" stroke-width="1.200"><rect x="11" y="2" width="3" height="3"/><rect x="6" y="7" width="3" height="3"/><rect x="1" y="12" width="3" height="3"/><rect x="12" y="12" width="3" height="3"/></g><rect x="11.500" y="7" width="2.500" height="2.500" fill="#a020e0"/></svg>
<svg class="a" style="left:828px;top:92px" width="14" height="15" viewBox="0 0 14 15"><path d="M2 2H12V5L9 7.5L12 10V13H2L7 7.5Z" fill="#a878d8" stroke="#000" stroke-width="1.400" stroke-linejoin="round"/></svg>
<svg class="a" style="left:858px;top:90px" width="19" height="19" viewBox="0 0 19 19"><rect x="0" y="0" width="19" height="19" fill="#0808a0"/><path d="M0 0H19A19 19 0 0 1 0 19Z" fill="#1828e0"/><path d="M0 0H15A15 15 0 0 1 0 15Z" fill="#f01020"/><path d="M0 0H11A11 11 0 0 1 0 11Z" fill="#f020e0"/><path d="M0 0H7A7 7 0 0 1 0 7Z" fill="#f8f000"/></svg>
<div class="a" style="left:887px;top:87px;width:25px;height:25px;border:1px solid #fff;border-top-color:#8a8a8a;border-left-color:#8a8a8a;background:linear-gradient(#f4f4f4,#d0d0d0)"></div>
<svg class="a" style="left:890px;top:90px" width="20" height="20" viewBox="0 0 20 20"><path d="M1 14L14 1M3 19L19 3M11 19L19 11" stroke="#20a0a0" stroke-width="1.300"/></svg>
<svg class="a" style="left:920px;top:90px" width="20" height="20" viewBox="0 0 20 20"><g stroke="#f03030" stroke-width="1.100" fill="none"><path d="M6 6L10 2M10 2h-2.600M10 2v2.600"/><path d="M13 5L17 1M17 1h-2.600M17 1v2.600"/><path d="M1 16L5 12M5 12h-2.600M5 12v2.600"/><path d="M9 9L13 13M13 13h-2.600M13 13v-2.600"/><path d="M14 14L18 17M18 17h-2.600M18 17l-0.500-2.600"/><path d="M1 8l3 1"/></g></svg>
<div class="sep" style="left:946px;top:85px;width:2px;height:28px;"></div>
<div class="a" style="left:950px;top:87px;width:25px;height:25px;border:1px solid #fff;border-top-color:#8a8a8a;border-left-color:#8a8a8a;background:linear-gradient(#f4f4f4,#d0d0d0)"></div>
<svg class="a" style="left:952px;top:89px" width="21" height="21" viewBox="0 0 21 21"><path d="M1.500 1V13L4.500 10.200L6.500 14.500L8.500 13.500L6.500 9.500H10Z" fill="#fff" stroke="#000" stroke-width="1"/><circle cx="13" cy="14" r="4" fill="none" stroke="#a010d0" stroke-width="1.300"/><path d="M9 19L17 9" stroke="#a010d0" stroke-width="1.300"/></svg>
<svg class="a" style="left:983px;top:89px" width="21" height="21" viewBox="0 0 21 21"><path d="M1.500 1V13L4.500 10.200L6.500 14.500L8.500 13.500L6.500 9.500H10Z" fill="#fff" stroke="#000" stroke-width="1"/><text x="10.500" y="19" font-size="14" fill="#e010c0" font-family="DejaVu Sans,Liberation Sans,sans-serif" font-weight="bold">?</text></svg>
<svg class="a" style="left:1014px;top:89px" width="21" height="21" viewBox="0 0 21 21"><path d="M1.500 1V13L4.500 10.200L6.500 14.500L8.500 13.500L6.500 9.500H10Z" fill="#fff" stroke="#000" stroke-width="1"/><circle cx="14" cy="15" r="2.600" fill="#a010d0"/></svg>
<svg class="a" style="left:1045px;top:89px" width="21" height="21" viewBox="0 0 21 21"><path d="M1.500 1V13L4.500 10.200L6.500 14.500L8.500 13.500L6.500 9.500H10Z" fill="#fff" stroke="#000" stroke-width="1"/><path d="M9 18L18 8" stroke="#a010d0" stroke-width="1.200"/><circle cx="9" cy="18" r="1.300" fill="#a010d0"/><circle cx="18" cy="8" r="1.300" fill="#a010d0"/></svg>
<svg class="a" style="left:1076px;top:89px" width="21" height="21" viewBox="0 0 21 21"><path d="M1.500 1V13L4.500 10.200L6.500 14.500L8.500 13.500L6.500 9.500H10Z" fill="#fff" stroke="#000" stroke-width="1"/><path d="M7 18L13 11L19 18Z" fill="#a860d8"/></svg>
<svg class="a" style="left:1107px;top:89px" width="21" height="21" viewBox="0 0 21 21"><path d="M1.500 1V13L4.500 10.200L6.500 14.500L8.500 13.500L6.500 9.500H10Z" fill="#fff" stroke="#000" stroke-width="1"/><path d="M18 4L10 11L17 17H5" fill="none" stroke="#a010d0" stroke-width="1.300"/><circle cx="18" cy="4" r="1.200" fill="#a010d0"/><circle cx="17" cy="17" r="1.200" fill="#a010d0"/><circle cx="5" cy="17" r="1.200" fill="#a010d0"/></svg>
<svg class="a" style="left:1138px;top:89px" width="21" height="21" viewBox="0 0 21 21"><path d="M1.500 1V13L4.500 10.200L6.500 14.500L8.500 13.500L6.500 9.500H10Z" fill="#fff" stroke="#000" stroke-width="1"/><path d="M5 17L10 11H12V17Z" fill="#d8a8f0" stroke="#000" stroke-width="0.900"/><rect x="12" y="6" width="6" height="11" fill="#c080e8" stroke="#000" stroke-width="1"/><circle cx="15" cy="15.500" r="2.800" fill="#8010c0" stroke="#000" stroke-width="0.700"/></svg>
<svg class="a" style="left:187px;top:115px;background:#808080" width="743" height="593" viewBox="0 0 743 593" shape-rendering="crispEdges"><g shape-rendering="geometricPrecision"><path d="M305.5 56.5 L550.5 56.5 L550.5 150.5 L562.5 167.5 L562.5 240.5" stroke="#fff" stroke-width="1.5" fill="none" /><path d="M305.5 71.5 L338.5 71.5 L338.5 87.5 L305.5 87.5" stroke="#fff" stroke-width="1.5" fill="none" /><path d="M371.5 56.5 L371.5 66.5" stroke="#fff" stroke-width="1.5" fill="none" /><path d="M355.5 252.5 L355.5 102.5" stroke="#fff" stroke-width="1.5" fill="none" /><path d="M355.5 102.5 L475.5 102.5 L475.5 240.5" stroke="#ffff58" stroke-width="1.5" fill="none" /><path d="M360.5 252.5 L360.5 368.5" stroke="#fff" stroke-width="1.5" fill="none" /><path d="M360.5 368.5 L475.5 368.5 L475.5 251.5" stroke="#ffff58" stroke-width="1.5" fill="none" /><path d="M370.5 173.5 L441.5 173.5 L441.5 357.5 L370.5 357.5 Z" stroke="#fff" stroke-width="1.5" fill="none" /><path d="M305.5 383.5 L338.5 383.5 L338.5 400.5 L305.5 400.5" stroke="#fff" stroke-width="1.5" fill="none" /><path d="M305.5 467.5 L565.5 467.5 L565.5 256.5" stroke="#fff" stroke-width="1.5" fill="none" /><path d="M475.5 240.5 L563.5 240.5" stroke="#fff" stroke-width="1.5" fill="none" stroke-dasharray="3 1 1 1"/><path d="M475.5 251.5 L533.5 251.5" stroke="#fff" stroke-width="1.5" fill="none" stroke-dasharray="2 1 1 2"/><path d="M549.5 256.5 L565.5 256.5" stroke="#fff" stroke-width="1.5" fill="none" stroke-dasharray="2 1"/><path d="M305.5 252.5 L360.5 252.5" stroke="#fff" stroke-width="1.5" fill="none" stroke-dasharray="6 14 8 10 3 8"/><path d="M490.5 251.5 L490.5 287.5 L504.5 287.5 L504.5 251.5" stroke="#fff" stroke-width="1.5" fill="none" /><path d="M490.5 261.5 L504.5 261.5" stroke="#fff" stroke-width="1.5" fill="none" /><path d="M533.5 251.5 L533.5 287.5 L549.5 287.5 L549.5 256.5" stroke="#fff" stroke-width="1.5" fill="none" /><path d="M533.5 261.5 L549.5 261.5" stroke="#fff" stroke-width="1.5" fill="none" /><circle cx="305" cy="261" r="513" stroke="#fff" stroke-width="1.5" fill="none"/></g><g fill="none" stroke-width="1"><path d="M605.4 15l9.6 0.2 10 1 10 1.7 10 2.6 10 3.3 10 4.1 10 5 9 5.3 10 6.7 9 6.9 9 7.9 8.4 8.3 9.6 10.8 8.7 11.2 7.3 10.6 0 2.4M746 401l0 1.9 -5.7 8.1 -15.3 18.2 -14.4 13.8 -15.6 11.8 -16 9.5 -16 7.1 -16 4.9 -17 2.9 -18 0.4 -17-2.3 -14-4.1 -17-8 -3-0.7 -58 1.1 -77 0 -47-0.8 -27-1.7 -14-2.4 -10.1-3.7 -3.9-2.6 -3-2.8 -2.5-3.6 -1.9-4 -1.9-7 -0.9-9 0.5-8 1.6-6 2.3-4 4.4-4 6.5-3 8.9-2.5 0.5-1.5 0-7 -0.5-9.2 -17-1.3 -8-2 -2.2-1.5 -1.8-2.5 -1.2-3.5 -0.8-5.4 -0.7-13.6 -0.3-25 0-199 0.9-26 1-6 1.7-4 2.4-2.2 5.1-1.8 20.9-1.8 1-15.2 -1.9-5 0.1-3 1.2-2 1.6-1.4 5-2.1 10-1.3 19-0.5 163.8-0.7 1.7-8 3.8-7 6.3-7 8.4-6.2 10-5.2 12-4.1 12-2.4 13.4-1.1" stroke="#000076"/><path d="M364.4 58l55.6-0.8 70 0.4 32 1.6 9 1.3 7 1.8 3.4 1.7 2.6 2.3 1.8 2.7 1.4 4 1.8 12 1 21.5 27 2.5 21 4.1 19 6.2 17 8.4 8.2 5.3 7.9 6 7.9 6.9 7 7.3 6.5 7.8 6.3 9 5.4 9 4.5 9 6.2 16 4.1 16 2.2 16 0.4 17 -1.5 17 -3.3 16 -4.9 15 -6.9 15 -9.9 16 -11.1 13.5 -13 12.1 -14.6 10.4 -16.4 8.5 -17 6.2 -18 4.1 -19 2 -1.8 31.2 -1.2 10 -1.6 8 -2.1 6 -3 5 -3.3 3.3 -5 3 -8 2.8 -11 2.1 -14 1.4 -19 1.1 -63 0.9 -30-0.5 -23-1 -22-2.6 -8-1.8 -7-2.3 -6-3 -4.7-3.4 -3.7-4 -3-5 -1.9-5 -1.1-6 -0.1-6 0.9-5 2-5 3-4 3.3-3 7.3-4.6 1-1.4 0.2-9 -0.6-7 -0.6-1.5 -17-2.7 -4.8-1.8 -2.8-2 -3.2-5 -1.9-9 -0.9-13 -0.4-20 -0.2-140 0.2-58 1.1-23 0.9-6 1.2-4 1.7-3 2.1-2 3-1.7 4-1.3 17-2.5 0.5-0.5 2-20 0.8-2 1.7-2 3-2 4-1.3 14.4-1.7" stroke="#00007f"/><path d="M366.8 59l21.2-0.7 44-0.2 57 0.8 17 1.1 13 1.6 9 2.1 7 3 4 3.1 3 4.1 2 4.7 1.6 6.4 2.4 22 1.7 44 1.9 3 2.6 3 2.8 4.5 2.5 2.5 0.5 1.3 2 1.9 12-0.8 12 1.9 12 4.2 12 6.8 9 7.2 7.9 8.5 6.3 9 5.2 10 3 8 2.1 8 1.3 8 0.5 9 -0.5 9 -1.2 8 -2.1 8 -2.9 8 -5 10 -7 10 -8.5 9 -8.9 7 -10.2 6 -11 4.5 -11 2.9 -12 1.4 -3 62.2 -1.8 18 -2.3 13 -3.1 10 -4.5 8 -5.3 5.4 -8 4.6 -8.8 3 -11.2 2.3 -15 1.9 -18 1.3 -25 0.8 -28 0.2 -26-0.5 -20-1.1 -22-3 -9-2.3 -6.7-2.6 -5.5-3 -5.1-4 -4.2-5 -2.7-5 -2.1-8 0.2-8 1.1-4 2-4 8-9.4 0.8-1.6 0.1-7 -1.1-10 -1.8-1.1 -15-3.5 -4-1.9 -3.1-2.5 -2.2-3 -1.9-5 -1.2-6 -0.8-9 -0.8-33 -0.3-145 0.3-40 0.9-20 2.1-11.2 1.7-3.8 2.5-3 2.8-2 4-1.7 15-3.3 1.8-1 3.2-17 1.2-3 1.8-2.3 3-2.1 5-1.8 13.8-1.8" stroke="#000087"/><path d="M406.1 59l57.9 0.2 33 1.6 13 1.6 10 2.1 8 2.9 6 3.8 3 3.1 2.5 3.7 2.2 5 1.7 6 2.7 20 2.4 41 1.7 4 7.6 12 1.7 4 1 7 1.5 19.7 8 0.8 8 2.1 7 3 7 4.4 6 5.4 5 6.1 4 7 2.9 7.5 1.8 11 -0.5 11 -3.2 11 -5.6 10 -7.4 8.1 -9 6.2 -10 3.9 -11 1.7 -3.5 68.1 -1.9 25 -3.1 22 -2.2 9 -2.3 6.7 -5 9.3 -6 6.5 -8 5.2 -11 4.3 -16 3.4 -20 2.3 -26 1.4 -30 0.3 -26-0.7 -21-1.6 -16-2.7 -12-3.7 -8-4.2 -6.6-5.5 -4.4-6 -2.8-7 -0.8-7 0.8-6 1.9-5 4.9-8.2 0.7-2.8 -0.2-8 -1.4-8 -2.1-1.5 -12-3.5 -5.9-3 -4-4 -2.8-6 -2.1-12 -1-21 -0.6-146 0.6-59 1-14 1.8-8.6 3-6.2 4-3.7 6-2.9 12-3.1 2-1.4 4.8-17.1 2.2-3.3 4-2.9 7-2.4 10-1.3 39.1-1.1" stroke="#000090"/><path d="M393.1 60l63.9-0.1 19 0.7 16 1.1 14 2 11 2.6 8 3.2 6.6 4.5 3.6 4 2.8 4.7 2.1 5.3 1.9 7.1 2.6 17.9 2.6 36 1.8 5.4 7.2 13.6 1.5 5 4.3 43.5 5 0.5 5 1.4 8 4.5 3.5 3.1 3.1 4 3.8 8 1.3 7 -0.3 7 -1.7 6 -3.2 6 -4.5 5 -5 3.5 -6 2.3 -6 0.9 -2.4 30.3 -2.6 49 -1.8 23 -3 22 -4.2 17 -5 11.1 -3.3 4.9 -3.7 4.1 -4 3.4 -5 3.3 -12.3 5.2 -15.7 3.8 -19 2.5 -24 1.6 -27 0.5 -25-0.7 -20-1.7 -16-2.8 -12-3.9 -8-4.2 -6-4.9 -4.7-6.2 -2.7-6 -1.2-6 0.2-6 1.3-5 3.1-8 0.6-4 -0.6-8 -1.5-7 -1.5-1.6 -12.2-4.4 -5.2-3 -4.6-5 -2.6-6 -1.7-8 -0.9-10 -0.9-36 0.3-64 -0.6-44 0.1-54 0.9-25 2-14 2.7-7 4.3-5 5.2-3 12.2-4.1 2-1.3 5.5-15.6 2.5-3.8 3-2.5 6-2.6 8-1.6 12-1 17.1-0.5" stroke="#010199"/><path d="M387.6 61l43.4-0.4 34 0.5 21 1.3 17.6 2.6 13.9 4 5.5 2.6 4 2.7 4 3.7 3 3.9 2.7 5.1 1.9 5 2.1 8 1.6 10 3.9 40 1.6 5 6.2 13 2.1 8 3.8 38 2.1 14.4 4 0.6 3 1 3.2 2 2.8 2.6 3.6 6.4 0.9 4 0.1 4 -1.5 6 -3.4 5 -4.7 3.2 -5 1.1 -4.1 39.7 -2.7 47 -1.9 23 -3.1 21 -4.1 16 -2.8 7 -3 6 -3.4 5 -3.9 4.4 -5 4.3 -5 3.3 -6 3 -7 2.6 -15 3.9 -18 2.6 -22 1.7 -25 0.5 -23-0.6 -19.5-1.7 -15.5-2.8 -12-3.9 -7-3.5 -6.4-4.8 -5.2-6 -3.1-6 -1.3-5 -0.4-6 0.6-5 2.1-9 0.2-4 -1-8 -1.6-6 -1.9-2 -11-4.7 -5.2-3.3 -4.4-5 -2.7-6 -1.8-8 -1.1-10 -0.9-34 0.3-65 -0.7-42 0.1-53 0.8-25 2.1-15 3.1-8 4.2-5 5.2-3.3 11-4.3 2.1-1.4 1.3-2 5.1-13 2.5-3.5 3-2.5 5-2.4 8-1.9 10-1.1 13.6-0.6" stroke="#0303a5"/><path d="M384.4 62l38.6-0.5 38 0.4 22 1.4 17.5 2.7 13.5 4 6 2.9 4.6 3.1 4.3 4 3 4 2.8 5 2.3 6 2.1 8 1.7 10 4.1 37 1.5 5 5.8 14 2 8 4.1 39 2.3 14 1.4 5.3 2 0.3 2.9 1.4 3.6 4 1.4 4 0.2 4 -0.6 3 -1.5 3.2 -2 2 -3 1.1 -1.7 6.7 -4.3 40 -2.6 43 -1.8 21 -3 20 -4.1 16 -2.5 7 -3.5 7 -3.8 6 -4.7 5.4 -5 4.3 -6 4 -6.8 3.3 -7.2 2.7 -15 3.8 -17 2.6 -21 1.6 -23 0.5 -22-0.6 -18-1.8 -15-2.9 -11.6-3.9 -7.4-3.9 -6-4.7 -4.6-5.4 -3.2-6 -1.5-5 -0.6-5 1.2-13 -0.1-5 -1.3-8 -1.6-5 -2.3-2.5 -10-4.9 -5.2-3.6 -4.2-5 -2.7-6 -1.9-8 -1.1-10 -1-32 0.4-66 -0.9-40 0.1-52 0.8-26 2-15 2.8-8 4.6-6 5.3-3.6 10-4.5 2.7-1.9 6.3-13.6 2-2.8 3-2.8 5-2.8 7-2 9-1.2 12.4-0.8" stroke="#0606b2"/><path d="M382.3 63l35.7-0.7 41 0.4 22 1.5 16.9 2.8 14.1 4.5 6 3 5 3.5 4 3.9 3.1 4.1 2.9 5.4 2.6 6.6 3.7 17 4.3 35 1.7 6 5.2 14 1.9 8 4.1 38 1.8 12 3.2 10 0.5 1 2.1 1 2 3 0.9 3 0.1 4 -1.1 4 -2.8 5 -1.4 6 -4.6 40 -2.5 40 -2 21 -2.9 19 -4.2 16 -3 8 -3.6 7.1 -4 6 -5 5.7 -6 5.1 -6 3.8 -7 3.4 -8 2.9 -15 3.8 -17 2.5 -20 1.5 -21 0.4 -20-0.8 -17-1.8 -14-2.8 -11-3.8 -6-3.1 -5-3.5 -4.7-4.4 -3.3-4.4 -2.8-5.6 -1.4-5 -0.6-5 -0.1-15 -1.6-8 -1.7-5 -2.8-3.1 -9-4.9 -5.3-4 -4-5 -3-7 -1.8-8 -1.1-10 -1-31 0.5-65 -0.9-39 -0.1-51 0.9-26 1.9-15 2.2-7 3.5-6 5.5-5 12.9-7 2.2-3 5.6-11.1 4.6-4.9 5.4-3 6-1.8 8-1.3 11.3-0.9" stroke="#0808be"/><path d="M380.8 64l33.2-0.8 43 0.4 22 1.5 16.8 2.9 8.2 2.4 6.6 2.6 5.6 3 4.8 3.5 4.5 4.5 3.5 4.9 3 5.9 2.3 6.2 3.5 16 4.4 33 6.4 20 2 9 5.7 48 2.2 8 2.9 5 1.4 4 0.7 4 -0.1 4 -0.5 4 -1.5 3 -0.9 4 -2.1 22 -2.7 17 -2.9 43 -2.2 21 -2.9 17 -4.1 15 -3.6 9 -3.7 7 -4.3 6.1 -5 5.5 -6 5 -6 3.8 -7.3 3.6 -8.7 3.2 -14 3.5 -17 2.6 -19 1.5 -20 0.3 -19-0.8 -16-1.8 -13-2.8 -11-3.9 -6-3.1 -5-3.5 -4.4-4.2 -3.6-4.7 -2.7-5.3 -1.5-5 -2-19 -1.7-7 -1.8-5 -3.3-3.7 -8.7-5.3 -4.8-4 -3.8-5 -2.9-7 -1.8-8 -1.2-10 -1-30 0.6-65 -1.1-38 -0.1-50 0.9-26 2-16 2.6-8 3.7-6 5.8-5 11.6-7 1.6-2 5.6-10.2 5-5.5 5-3 6-2 8-1.4 9.8-0.9" stroke="#0c0ac9"/><path d="M418.6 64l44.4 0.7 14.5 1.3 12.2 2 11.2 3 9.5 4 7.7 5 6 6 3.5 5 2.5 5 2.3 6 2.2 8 2.3 12 3.9 28 6.1 21 2 9 5.5 47 2.2 8 2.9 5 0.9 8 0 8 -1.4 5.2 -2 22.8 -3.4 20 -2.4 37 -1.9 19 -4.3 23.8 -2.6 9.2 -3.4 9 -4.7 9 -5.7 8 -6.6 6.5 -7.6 5.5 -9.4 4.9 -10 3.7 -12 3 -13 2.2 -15 1.6 -17 0.7 -17-0.2 -15-1 -13-1.8 -11-2.6 -9-3.2 -8-4.2 -8-6.5 -5.5-7.6 -3.1-8 -2.8-17 -3.3-11 -3.3-4.5 -10.7-7.5 -5.4-6 -3.8-8 -2.6-12 -1.1-13 -0.6-18 0.6-70 -1.1-36 -0.2-48 1.2-33 1.3-10 2.2-8 2.9-6 3.2-4 4.9-4 10.2-6.5 9-13.7 4-3.8 4-2.3 8-2.7 12-1.8 16-0.8 25.6-0.4" stroke="#1a0ad2"/><path d="M402.2 65l39.8-0.1 25 1.1 19 2.5 15 4.2 7 3.1 5.3 3.2 5 4 4.6 5 3.9 6 2.8 6 4.3 15 5.5 35 7.4 29 5.2 45 2.2 10 2.9 6 0.5 9 0.1 7 -1.8 26 -4.1 21 -2.7 40 -2.8 23 -3.3 16 -4.5 14 -5.5 11.3 -7 9.8 -8.4 7.9 -10.6 6.7 -12 5 -15 4.1 -15 2.4 -16 1.5 -17 0.4 -17-0.5 -14-1.5 -13-2.4 -10-3 -9-4.2 -9-6.6 -6.4-7.9 -3.6-8.1 -4-17.9 -3.6-10 -3.4-4.2 -9.1-6.8 -4.8-5 -3.9-7 -2.7-9 -1.7-13 -0.9-19 0.6-74 -1.2-31 -0.4-38 0.9-41 1.1-12 1.8-9 2.7-7 4.1-6 4.5-4 10.1-7 8.9-12.7 3-3.1 4-2.7 7-2.9 9-1.9 12-1.1 18.2-0.6" stroke="#270ada"/><path d="M395.7 66l39.3-0.3 28 0.9 19 2.3 15.6 4.1 7 3 6.4 3.7 5 3.9 4.2 4.4 3.8 5.4 3.4 6.6 2.6 7 2.1 8 5.8 35 5.6 22 1.8 9 5.4 47 1.6 7 2.2 5 0.9 21 -0.8 20 -0.8 6 -2.8 9 -1 6 -2.6 39 -2.7 22 -3.3 16 -4.5 14 -5.9 12 -7 9.7 -8.8 8.3 -10.2 6.5 -12 5.2 -14 3.9 -14 2.5 -15 1.4 -17 0.6 -16-0.4 -14-1.4 -12-2.2 -11-3.2 -9-4.1 -9-6.4 -4-4.2 -3-4.1 -3.8-8.1 -4.7-17 -3.5-9 -3-4 -9.8-8 -4.4-5 -3.7-7 -2.4-8 -1.9-13 -0.9-19 -0.1-28 0.7-46 -1.2-29 -0.5-37 0.8-42 1.2-13 1.8-9 2.6-7 3.9-6 4-4 10.7-8 8.2-11.3 6-5.4 6-2.9 9-2.4 11-1.3 14.7-0.7" stroke="#360ae1"/><path d="M391.7 67l38.3-0.5 30 0.8 19 2.1 16 4.2 7 2.9 6.2 3.5 5.3 4 4.9 5 4.3 6 3.1 6 2.6 7 2.2 8 6.1 35 6.9 31 4.8 44 1.4 8 2 6 0.7 16 1.1 6 -0.6 21 -0.6 4 -2.8 7 -1.3 6 -2.6 39 -2.7 22 -3.4 16 -4.6 13.9 -5.4 11.1 -7.1 10 -8.5 8.3 -10 6.6 -12 5.4 -14 4.2 -13 2.4 -15 1.6 -16 0.6 -16-0.4 -14-1.3 -12-2.2 -10-3 -9-4 -9.1-6.2 -3.9-3.8 -3.2-4.2 -4.2-8 -6-18 -3-7 -3.6-4.7 -8.4-7.3 -4.4-5 -3.9-7 -2.5-8 -1.9-13 -1-19 -0.2-28 0.8-46 -1.3-28 -0.4-34 0.7-44 1.1-13 1.6-9 2.7-8 4.5-7 4.1-4 9.5-7.5 9-11.6 5-4.3 6-3.1 8-2.3 10-1.4 12.7-0.8" stroke="#4a0adf"/><path d="M388.8 68l36.2-0.6 33 0.7 19 2 15.3 3.9 7.3 3 6.4 3.5 5.9 4.5 4.9 5 3.6 5 3.6 6.7 2.9 7.3 2.2 8 6.1 34 6.5 30 4.7 45 2.6 14 0.5 12 0.7 4 1.3 3 0.6 5 -0.4 20 -1 4 -3.3 6 -1.1 5 -2.3 37 -2.6 22 -3.3 16 -4.5 14 -5.6 11.6 -7 9.9 -8 8 -10 6.9 -12 5.7 -14 4.3 -13 2.5 -14 1.6 -16 0.7 -15-0.4 -14-1.4 -12-2.2 -10-2.9 -9-4.1 -9-6.1 -7.3-8.1 -4.3-8 -6-16 -3.2-7 -3.2-4.5 -9.1-8.5 -4.1-5 -3.2-6 -2.6-8 -2.1-13 -1.1-19 -0.1-28 0.9-46 -1.4-27 -0.5-33 0.6-44 1-13 1.7-10 2.7-8 4.2-7 3.7-4 9.6-8 7.8-9.7 5-4.8 6-3.5 7-2.3 9-1.6 12.8-1.1" stroke="#5f0add"/><path d="M386.6 69l33.4-0.8 35 0.6 19 1.9 8 1.5 8 2.3 7 2.8 6.8 3.7 5.5 4 5.1 5 4.5 6 3.3 6 2.8 7 2.7 9 6.2 34 6 29 4.7 47 1.7 12 0.2 12 0.8 3 2.3 3 1 7 -0.4 21 -0.9 2 -3.7 4 -1.3 5 -2 37 -2.7 23 -3.4 16 -4.3 13 -5.9 12 -7 9.8 -8.4 8.2 -10.3 7 -11.3 5.3 -14 4.3 -13 2.5 -14 1.5 -15 0.6 -14-0.4 -13-1.2 -12-2.3 -10-2.9 -9-4.1 -5-3 -5-4 -7-8.1 -4-7.2 -9.2-21 -3.5-5 -8.2-8 -4-5 -3.3-6 -2.7-8 -2.2-13 -1.1-19 -0.1-28 0.9-46 -1.4-26 -0.6-30 0.5-45 1-14 1.5-10 2.8-9 4.7-8 3.7-4 9.1-8 8.1-9.7 4-3.6 6-3.6 7-2.4 9-1.7 10.6-1" stroke="#7109da"/><path d="M384.7 70l32.3-0.9 37 0.5 20 2.1 15 3.8 7 2.8 6.5 3.7 5.5 4.1 5 5 4.4 5.9 3.3 6 2.9 7 2.6 9 10.7 55 2.2 14 4.4 52 -0.5 17.3 0.7 2.7 1.3 2.3 2 1.6 2 0.5 0 0.6 0.2 22 -5.2 1.2 -1.4 1.8 -0.4 2 -1.3 37 -2.9 26 -3.4 16 -4.4 13 -5.9 12 -7.1 10 -8.2 8 -10 6.9 -12 5.6 -13 4.1 -12 2.4 -14 1.7 -15 0.6 -14-0.4 -13-1.3 -11-2.1 -10-3 -9-4 -9.5-6.5 -7.5-8.3 -4-6.7 -7.4-16 -3.3-6 -3.3-4.1 -7.6-7.9 -4.4-6 -2.9-6 -2.2-7 -2.1-13 -1-18 -0.1-28 1-46 -1.6-26 -0.6-32 0.6-44 0.9-13 1.7-10 2.8-9 4-7 4.4-5 8.7-8 10.4-11.4 5-3.4 7-3 9-2 10.7-1.2" stroke="#7f06d4"/><path d="M406.6 70l41.4 0.2 14 0.9 11 1.4 10 2.2 9 3.2 7.8 4.1 6.8 5 5.4 5.5 4.6 6.5 3.6 7 2.9 8 3.7 15 9.7 53 2.6 26 1.7 34 -0.6 6 -1.7 5 -2.5 3 -3 1 -0.7 9 -0.1 17 0.2 4 5 3 1.5 3 0.9 7 -0.1 14 -0.9 18 -1.7 16 -2.4 14 -3.2 12 -4.5 12 -6 10.9 -7 9 -8 7.4 -10 6.5 -11 5.1 -13 4 -14 2.7 -12 1.3 -13 0.5 -13-0.4 -12-1.1 -11-2 -9-2.5 -9-3.6 -7-4.1 -7-5.6 -5-5.7 -4.6-7.4 -10.5-20 -10.4-12 -3.7-5 -2.7-5 -1.9-5 -2.7-12 -1.2-12 -0.6-16 0-26 1-43 -1.9-32 -0.4-43 1-34 1.3-11 2-9 3.4-8 4.1-6 10.8-10.6 8-8.9 7-5.2 8-3.4 10-2.1 13-1.2 17.6-0.6" stroke="#8d02cd"/><path d="M399.5 71l43.5-0.1 15 0.8 11 1.1 10 2 9 2.8 8 3.7 7 4.7 5.5 5 4.8 6 4.1 7 3.4 8 4.3 16 8.4 46 3.3 27 1.7 36 -1.1 11 -1.4 3 -3 1.8 -1.1 4.2 -0.8 9 -0.1 15 0.6 6 4 5 1.5 4 0.7 6 0.1 10 -0.6 16 -1.5 16 -2 13 -2.9 12 -4.1 12 -5.5 11 -6.3 9.1 -8 8.2 -9 6.7 -11 5.7 -12 4.2 -14 3.2 -12 1.6 -13 0.7 -13-0.1 -12-1 -11-1.7 -10-2.6 -9-3.4 -7-3.8 -7-5.3 -6.1-6.5 -4.9-7.3 -10.4-18.7 -13-16 -4.6-9 -3.2-12 -1.4-12 -0.8-17 0-27 1.1-43 -1.9-30 -0.6-39 0.9-37 1.3-12 1.8-9 3.4-9 4.7-7 17.7-18.5 6-4.6 7-3.3 9-2.4 11-1.4 15.5-0.8" stroke="#9900c5"/><path d="M395.1 72l36.9-0.4 27 1 18 2.7 7 2 6.7 2.7 6.3 3.4 6.2 4.6 5 5 4.5 6 3.9 7 2.8 7 2.7 9 2.4 11 8.8 51 1.8 19 1.2 23 0.1 9 -0.8 10 -1.1 4 -2.1 3 -1.2 3 -1.3 11 0.3 19 0.8 3 3.8 8 1.3 12 -1.1 26 -1.4 13 -2 11 -3.7 14 -4.9 12.3 -6.2 10.7 -7.8 9.3 -9.1 7.7 -10.9 6.4 -12 4.7 -14 3.6 -12 1.8 -12 0.9 -13 0.1 -12-0.7 -11-1.6 -10-2.3 -9-3.1 -8-4 -5-3.3 -5-4.2 -8-9.6 -12.3-20.7 -9.9-12 -3.4-5 -3.7-8 -2.7-10 -1.5-12 -0.9-17 0-27 1.2-44 -2-28 -0.7-38 0.9-39 1.2-12 1.7-9 3.3-9 4.3-7 16.5-17.5 6-5 7-3.6 8-2.4 10-1.5 14.1-1" stroke="#a500bd"/><path d="M391.8 73l34.2-0.6 30 0.9 18 2.3 7 1.8 7 2.6 7 3.7 6 4.3 5.2 5 4.6 6 4 7 2.9 7 4.9 18 8.7 51 1.8 18 1.1 21 0.1 12 -0.8 11 -1.4 7 -1.3 2 -1.3 4 -0.9 10 0.5 18 4.2 13 0.9 12 -1 24 -3.1 22 -3.6 14 -4.7 12 -6.3 11 -7.5 9.2 -9 7.7 -10 6.1 -12 5 -14 3.7 -12 1.9 -12 1 -12 0.1 -12-0.7 -11-1.5 -10-2.3 -9-3 -8-3.9 -10-7.3 -5-5.2 -4-5.2 -11.6-18.6 -9.6-12 -3.3-5 -3.8-8 -2.4-9 -1.8-13 -0.9-16 0-28 1.2-44 -2-27 -0.7-35 0.6-40 1-12 1.7-10 3.3-10 4.8-8 14.5-15.6 6-5.2 6-3.5 8-2.8 10-1.8 12.8-1.1" stroke="#b000b5"/><path d="M389.2 74l32.8-0.8 32 0.8 18 2.2 7 1.7 7 2.5 7 3.5 5.9 4.1 5.1 4.8 4.3 5.2 4.3 7 3.1 7 2.7 8 2.5 10 8.5 50 1.7 17 1.1 19 0.1 15 -0.9 13 -0.7 7 -1.2 2 -1.2 4 -0.9 10 0.4 17 3.7 15 0.9 12 -0.9 22 -2.8 21 -3.6 14 -4.6 12 -6.2 11 -7.3 9.1 -9 7.9 -10 6.1 -12 5.1 -13 3.5 -11 1.9 -12 1.1 -13 0.2 -12-0.7 -11-1.6 -10-2.3 -9-3.1 -8-3.9 -10-7.3 -5-5.2 -4-5.1 -10.9-16.7 -12.6-17 -3.7-8 -2.5-9 -1.9-13 -0.8-16 -0.1-28 1.4-44 -2.1-26 -0.8-35 0.6-40 0.9-12 1.7-10 3.1-10 4.4-8 6.8-8 12.5-12.1 7-4.3 7-2.5 9-1.9 12.2-1.2" stroke="#bb00ac"/><path d="M387.1 75l31.9-0.9 34 0.7 18 2.1 7 1.7 6.7 2.4 6.3 3.1 6 4.1 5.3 4.8 4.9 6 3.7 6 3.2 7 2.7 8 2.5 10 8.1 48 1.8 17 1 18 0.2 17 -1.4 21 -2 6 -0.8 10 0.4 17 3.3 16 0.7 12 -0.8 21 -2.8 20 -3.5 14 -4.7 12 -5.8 10.3 -7 8.8 -8.8 7.9 -10.2 6.4 -11 4.7 -13 3.7 -11 1.9 -12 1.1 -12 0.3 -12-0.7 -11-1.4 -10-2.3 -9-3 -8-3.8 -6-3.8 -5-4.1 -9-10.1 -21.9-30.9 -3.9-8 -2.7-9 -2-13 -0.9-16 -0.1-29 1.4-44 -2.2-25 -0.8-33 0.5-41 1-13 1.5-10 2.9-10 4.2-8 6.4-8 11.6-11.5 6-4 8-3.2 9-2.1 11.1-1.2" stroke="#c600a1"/><path d="M408.5 75l38.5 0.3 12 0.8 10 1.4 9 2.1 7 2.6 7 3.9 6.4 4.9 5.6 6 4.1 6 3.5 7 3.4 9 4.8 21 6.3 41 1.9 22 0.5 22 -1.2 26 -1.3 4 -0.8 6 -0.3 15 0.7 10 2.8 17 0.4 15 -0.6 13 -1.5 13 -2.1 12 -2.7 10 -4.7 12 -5.7 10 -7.2 9 -8.3 7.3 -10 6.3 -11 4.8 -12 3.5 -14 2.3 -11 0.9 -11 0.2 -11-0.7 -11-1.4 -9-2 -9-3 -7-3.1 -7-4.2 -7-5.7 -6-6.5 -22.4-30.7 -3.2-6 -2.3-6 -1.8-7 -1.5-9 -1.1-15 -0.4-19 1.6-58 -1.6-15 -0.9-16 -0.6-44 1.1-33 1.4-11 2.1-9 3.7-9 5.4-8 10.5-11 4-3.4 5-3.2 8-3.2 10-2.2 13-1.4 18.5-0.6" stroke="#cf0096"/><path d="M401 76l38-0.1 24 1.5 9 1.6 8 2.3 7 3.1 5.8 3.6 5.9 5 5.1 6 3.8 6 3.7 8 2.7 8 2.5 10 5.4 31 3.1 24 1.5 23 0 21 -1 21 -1.5 9 -0.3 13 0.4 11 2.4 17 0.6 13 -0.4 13 -1.1 12 -1.6 11 -2.3 10 -3.9 12 -5.4 11 -6.4 9.1 -8 8.1 -9 6.5 -11 5.5 -12 4 -13 2.7 -11 1.2 -11 0.4 -11-0.3 -11-1.2 -10-1.9 -9-2.6 -8-3.3 -7-3.8 -7-5.2 -7-6.9 -20.5-27.3 -3.7-6 -2.7-6 -2.2-7 -1.6-8 -1.5-15 -0.5-20 1.7-61 -2.6-29 -0.8-41 1-35 1.3-12 1.8-9 3.8-10 5.1-8 9.4-10.3 8-6.3 8-3.7 9-2.4 12-1.5 15-0.8" stroke="#d9008b"/><path d="M396.3 77l34.7-0.4 26 1.1 16 2.5 7 2.1 6 2.7 6.2 4 5.7 5 4.9 6 3.7 6 3.3 7 2.7 8 4.7 21 5.6 39 1.3 16 0.7 16 -0.2 15 -0.8 12 -0.1 11 -1.1 9 -0.2 12 0.5 13 2.2 20 0.2 14 -1.3 19 -2.8 17 -3.8 13 -4.9 11 -6.5 10 -7 7.8 -9 7 -10 5.5 -12 4.4 -13 3 -11 1.4 -11 0.6 -11-0.2 -11-1 -10-1.7 -9-2.4 -8-3 -8-4.2 -8-5.7 -7-6.8 -7-8.4 -11.3-15.3 -4.4-7 -2.8-6 -2.3-7 -1.6-7 -1.7-15 -0.6-20 0.2-24 1.5-39 -2.6-27 -0.9-38 0.8-37 1-12 1.8-10 3.3-10 4.5-8 8.1-9.6 8-6.8 7-3.9 9-2.9 11-1.8 14.3-1" stroke="#e30080"/><path d="M392.8 78l33.2-0.6 28 0.9 16 2.1 7 1.8 6 2.4 6 3.4 5.1 4 4.8 5 4.3 6 3.3 6 3.2 8 2.7 9 2.4 11 5.9 40 1.5 16 0.7 16 0 15 -1 16 -0.7 32 0.4 13 1.8 20 0.2 13 -1.1 18 -2.4 16 -3.5 13 -4.6 11 -6 10 -7 8.2 -8.2 6.8 -9.8 5.8 -11 4.4 -13 3.4 -11 1.6 -11 0.7 -11 0 -11-0.8 -10-1.6 -9-2.2 -8-2.8 -8-3.8 -8-5.3 -7-6.1 -7-7.7 -9.6-12.6 -4.9-7 -3.8-7 -3-8 -1.9-8 -1.9-15 -0.7-21 0.3-24 1.6-39 -2.7-26 -1-37 0.7-38 1-12 1.7-10 3.1-10 4.2-8 7.1-9 7.8-6.9 7-4.1 8-2.8 10-2 13.8-1.2" stroke="#ea0074"/><path d="M389.9 79l31.1-0.8 31 0.8 17 2.1 12 3.7 6.1 3.2 5.3 4 4.9 5 3.8 5 3.4 6 3.4 8 4.9 18 2.9 17 3 22 1.6 17 0.8 16 -0.1 18 -1 16 -0.1 31 0.4 14 1.5 21 0.1 12 -1 17 -2.2 15 -3.3 13 -4.3 11 -5.9 10 -6.6 8 -8.1 7 -9.5 5.8 -11 4.6 -12 3.2 -11 1.7 -11 0.9 -11 0 -11-0.7 -10-1.5 -10-2.4 -8-2.8 -8-3.8 -8-5.2 -7-5.9 -7-7.5 -7.4-9.4 -5.6-8 -3.9-7 -2.9-7 -2.3-9 -1.9-15 -0.8-21 0.3-25 1.6-39 -2.7-25 -1.1-35 0.6-39 1-13 1.6-10 2.8-10 3.9-8 5.9-8 7.9-7.4 7-4.3 8-3 10-2.1 11.9-1.2" stroke="#f10069"/><path d="M387.5 80l28.5-0.9 33 0.5 17 1.8 7 1.5 6 2 6 3 5 3.5 4.9 4.6 4 5 3.6 6 3.2 7 5 17 2.9 16 3 22 1.7 17 0.9 17 0.1 17 -1.2 20 0 11 2.1 66 -0.8 16 -2 15 -3.1 13 -4.2 11 -5.6 10 -6.4 8 -8.1 7.2 -9 5.6 -10 4.4 -12 3.4 -10 1.7 -11 1.1 -11 0.2 -11-0.6 -10-1.3 -10-2.2 -8-2.6 -8-3.5 -7-4 -7-5.2 -7-6.7 -7-8 -6.3-8.5 -4.8-8 -3.4-8 -2.2-8 -2.2-15 -1-21 0.3-26 1.8-40 -2.9-24 -1-33 0.5-41 0.9-13 1.4-10 2.7-10 3.6-8 5.6-8 7-6.9 7-4.5 8-3.2 9-2.1 11.5-1.3" stroke="#f8005e"/><path d="M408.1 80l33.9 0.2 21 1.5 8 1.6 7 2.2 6 2.9 5.2 3.6 5.1 5 4.5 6 3.8 7 3.1 8 2.6 9 2.3 11 4.4 31 1.7 18 0.8 17 0 16 -1.2 20 0 11 1 11 1.3 54 -1.5 23 -1.6 10 -2.4 10 -3.9 11 -5.4 10 -6.2 8 -7.6 7.1 -9 5.8 -10 4.4 -12 3.5 -13 2.2 -10 0.8 -11 0 -11-0.7 -10-1.5 -9-2 -8-2.7 -8-3.6 -7-4.1 -8-6.1 -7-6.8 -6.9-8.3 -5.6-8 -3.7-7 -2.7-7 -2.1-8 -1.6-10 -1.1-16 -0.2-20 2.1-55 -2.1-14 -1.1-15 -0.9-45 1.2-34 1.4-11 2-9 4-10 5.1-8 6.2-6.4 8-5.3 9-3.4 10-2.1 13-1.2 17.1-0.6" stroke="#fb0751"/><path d="M400.6 81l33.4-0.2 23 1.1 15 2.5 6 2 5.2 2.6 4.8 3.3 4.8 4.7 4.6 6 3.3 6 2.9 7 2.8 9 4.1 21 3.9 32 1.5 28 -0.3 17 -1.2 17 0 11 1.1 5 0.5 8 0.9 54 -1.1 18 -2.6 16 -3.4 12 -4.4 10 -5.7 9 -6.7 7.3 -8 6.3 -10 5.3 -11 3.9 -13 2.8 -10 1.2 -11 0.4 -11-0.3 -10-1.1 -9-1.6 -9-2.5 -8-3 -8-4.1 -8-5.4 -7-6 -7-7.5 -5.1-6.7 -4.3-7 -3.2-7 -2.6-8 -1.8-9 -1.6-16 -0.4-21 0.5-22 1.7-37 -1.9-12 -1.3-14 -1-41 0.8-36 1.1-12 1.8-10 3.3-10 4.3-8 5.7-6.9 7-5.4 8-3.8 9-2.4 12-1.6 15.6-0.9" stroke="#fd1143"/><path d="M395.7 82l32.3-0.4 26 0.8 15 2.1 11 3.8 5 3 5 4.2 3.9 4.5 3.9 6 2.9 6 2.9 8 4.2 18 4.5 34 1.8 30 -0.1 16 -1.5 22 0 11 1.5 5 0.8 8 0.4 53 -0.8 17 -2.2 15 -3.1 12 -4.1 10.3 -5.1 8.7 -6.9 8.1 -8 6.5 -9 5.1 -11 4.1 -12 2.8 -10 1.3 -11 0.7 -11-0.2 -10-0.9 -9-1.5 -9-2.2 -8-2.8 -8-3.7 -8-4.9 -7-5.5 -6-5.8 -6-7.1 -4.6-7 -3.4-7 -2.8-8 -1.8-8 -1.8-16 -0.7-21 0.5-24 1.9-38 -2-12 -1.3-13 -1.1-38 0.7-38 1.1-13 1.7-10 3-10 4-8 4.6-6.1 6-5.2 8-4.3 9-2.7 11-1.7 13.7-1" stroke="#ff1b36"/><path d="M392 83l30-0.6 29 0.7 16 1.8 11 3.4 5 2.7 5 3.9 3.8 4.1 3.5 5 3.1 6 2.8 7 4.4 17 4.6 33 2.1 32 0 18 -1.6 23 0 11 1.9 5 0.9 8 0.1 53 -0.8 16 -2 15 -3 12 -3.9 10 -4.9 8.5 -6.1 7.5 -6.9 6 -9 5.4 -10 4.1 -12 3.1 -10 1.5 -11 0.8 -11-0.1 -10-0.7 -10-1.5 -9-2.1 -8-2.6 -8-3.5 -7-4 -7-5 -7-6.2 -5.5-6.2 -4.2-6 -3.6-7 -3-8 -2-8 -2.1-16 -0.7-22 0.5-25 1.9-31 0-7 -1.9-11 -1.4-13 -1.2-36 0.6-40 1-13 1.6-10 2.8-10 3.7-8 5.1-7 5.4-4.7 7-3.7 8-2.6 10-1.9 13-1.1" stroke="#ff2928"/><path d="M388.9 84l28.1-0.8 31 0.5 16 1.5 12 3.1 5 2.5 4.6 3.2 4 4 3.8 5 3.3 6 2.5 6 4.2 15 2.5 14 2.2 17 2.5 35 0 20 -1.8 24 0 11 1.8 3 1.2 5 0.7 20 -0.7 18 0 27 -2.1 21 -2.6 12 -3.5 10 -4.7 9 -5.9 7.7 -7 6.4 -8 5.1 -10 4.3 -11 3 -10 1.7 -10 0.9 -11 0.2 -11-0.6 -10-1.3 -9-1.9 -9-2.7 -8-3.3 -7-3.7 -7-4.7 -7-5.9 -5-5.2 -4.3-6 -3.8-7 -2.8-7 -2.1-8 -2.3-16 -0.9-22 0.5-27 2.1-31 0-7 -2-10 -1.3-12 -1.4-35 0.5-41 0.9-13 1.5-11 2.6-10 3.4-8 4.4-6.6 5-4.7 6-3.5 8-3 10-2 11.9-1.2" stroke="#ff381b"/><path d="M386.3 85l26.7-0.9 33 0.4 17 1.4 12 2.9 5 2.3 4.2 2.9 4.2 4 3.1 4 5.6 11 4.5 15 2.4 13 2.2 17 1.8 19 0.9 17 0 21 -2 25 0 11 2.4 3 1.1 4 0.7 7 0.2 13 -1.1 19 -0.1 28 -1.8 19 -2.5 12 -3.4 10 -4.7 9 -5.2 7 -6.5 6.2 -8 5.2 -9 4.1 -11 3.2 -10 1.8 -10 1 -11 0.2 -10-0.4 -10-1.1 -10-1.9 -9-2.6 -8-3.1 -7-3.5 -7-4.4 -7-5.5 -5.2-5.2 -4.4-6 -3.3-6 -2.8-7 -2.3-8 -2.4-17 -0.8-22 0.5-27 2.1-31 0-7 -2-10 -1.4-12 -1.4-34 0.4-41 0.8-13 1.5-11 2.3-10 3.2-8 3.5-6 4.7-4.9 6-3.8 8-3 9-2 11.3-1.3" stroke="#ff480d"/><path d="M405.5 85l30.5 0 21 1 14 2.3 9 3.8 4.1 2.9 3.9 4 3.5 5 3.1 6 2.7 7 2.3 8 3.7 21 2.8 27 1.3 25 -0.3 18 -2 24 0 11 2.5 2 1.2 3 0.9 6 0.3 10 -0.1 12 -1.3 14 -0.2 30 -1.1 12 -1.9 11 -3.1 11 -3.9 9 -5.2 8 -6.2 6.5 -8 5.7 -9 4.3 -10 3.1 -12 2.3 -10 1 -11 0.3 -11-0.5 -10-1.2 -9-1.7 -9-2.5 -8-3 -8-4 -7-4.4 -6-4.6 -5-4.9 -4-5.4 -3.6-7 -2.7-7 -2-8 -1.4-8 -1.3-16 -0.3-22 0.7-22 2.1-28 -0.1-7 -2.4-12 -1.4-14 -0.9-19 -0.3-25 1-36 1.2-12 2-10 2.9-9 3.7-7 4.8-5.3 6-3.7 8-3 10-2.1 13-1.3 16.5-0.6" stroke="#ff5508"/><path d="M398.3 86l30.7-0.3 24 0.8 14 1.7 10 3.1 4 2.3 4 3.4 3.4 4 3.1 5 4.9 12 3.9 17 3.5 28 1.8 30 -0.1 21 -2.3 26 0 11 2.6 1 1.6 3 0.9 5 0.4 8 -0.1 16 -1.7 14 0 29 -2.2 20 -2.6 11 -3.8 10 -4.6 8 -5.7 6.6 -7 5.7 -8 4.3 -10 3.6 -11 2.5 -10 1.3 -11 0.6 -11-0.2 -10-0.9 -10-1.5 -9-2.2 -8-2.6 -8-3.5 -7-3.8 -7-4.9 -5-4.3 -4-4.7 -3.5-6 -2.6-6 -2.2-7 -1.7-8 -1.9-17 -0.5-22 0.7-25 2.2-29 0-7 -2.4-11 -1.5-13 -1.3-40 0.8-39 1.1-13 1.7-10 2.5-9 3.8-8 3.8-4.8 5-3.6 7-3 9-2.3 11-1.4 15.3-0.9" stroke="#ff6205"/><path d="M393.3 87l29.7-0.5 27 0.6 15 1.5 10 2.7 4 2 3.7 2.7 3.8 4 2.7 4 4.9 11 3.7 14 3.9 28 2.2 33 -0.1 23 -0.8 13 -1.7 14 0 11 2.7 0.3 1.7 1.7 1.3 5 0.5 8 -0.1 18 -2.2 13 0.1 31 -1.8 17 -2.4 11 -3 9 -4.1 8 -5.3 7 -6.7 5.9 -7 4.2 -9 3.7 -11 2.8 -10 1.5 -10 0.8 -21-0.5 -19-3 -9-2.5 -8-3 -7-3.4 -7-4.2 -6-4.6 -4-4.1 -3.3-4.6 -2.9-6 -2.5-7 -1.9-8 -2.2-17 -0.6-23 0.6-26 2.3-30 0-7 -2.3-10 -1.5-12 -1.4-37 0.5-41 0.9-13 1.5-11 2.3-9 3.2-8 3.2-5 4.1-3.6 6-3.1 9-2.6 11-1.7 13.3-1" stroke="#ff6e02"/><path d="M389.4 88l26.6-0.7 30 0.4 16 1.2 11 2.4 4 1.7 4 2.6 5.9 6.4 5 10 3.8 13 2.2 12 2 16 2.4 36 -0.1 24 -1 13 -1.8 14 0.1 11 5.2 1 1 4 0.5 7 -0.1 22 -2.2 7 -0.4 3 0.4 28 -1.5 19 -2 11 -3 10 -3.7 8 -4.7 6.7 -6 5.8 -7 4.5 -8 3.6 -10 2.9 -10 1.7 -10 1 -21 0 -10-1 -10-1.7 -9-2.3 -8-2.7 -14-6.9 -6-4 -5-4.6 -3-4 -2.7-5 -2.6-7 -1.9-7 -2.4-17 -0.9-24 0.7-28 2.4-30 0-7 -2.3-9 -1.6-12 -1.5-35 0.4-42 0.8-14 1.4-11 2.1-9 2.4-7 3.4-6 3.3-3.3 6-3.3 8-2.6 10-1.7 12.4-1.1" stroke="#ff7b00"/><path d="M386 89l26-0.8 32 0.3 17 1.1 11 2.2 7 3.2 3.6 3 2.5 3 4.9 9 3.7 12 2.4 12 2 15 2.6 38 -0.2 26 -1 13 -2 14 0.1 11 6.7 1 0.7 8 -0.1 26 -0.1 1 -2.5 3 -0.8 4 0.9 27 -1.3 20 -1.9 11 -2.5 9 -3.4 8 -4.6 7 -5.7 5.8 -6 4.2 -8 3.7 -9 2.8 -18 2.9 -21 0.5 -20-2.1 -9-1.9 -9-2.6 -15-6.5 -6-3.6 -5-4 -3.7-4.2 -2.4-4 -2.5-6 -2.1-7 -2.8-17 -1.1-24 0.7-30 2.5-31 0-7 -2.2-8 -1.6-11 -1.7-33 0.2-43 0.8-15 1.2-11 1.7-9 2.5-8 3-6 3.5-3.7 5-2.9 8-2.6 9-1.7 11-1.1" stroke="#ff8600"/><path d="M414.7 89l28.3 0.3 18 1.1 11 2.1 4 1.6 4 2.5 3.4 3.4 2.6 4 2.5 5 2.4 7 3.6 16 2.5 21 2 32 -0.2 28 -1.1 14 -2 13 0 11 -0.7 0.8 -5 0.2 0 32 0 3 8 0.6 1 3.3 1.5 17.1 0.3 16 -1 15 -2.1 13 -2.8 10 -3.6 8 -4.3 6.2 -6 5.6 -7 4.3 -9 3.5 -10 2.5 -12 1.7 -11 0.6 -11 0 -11-0.8 -10-1.4 -10-2.1 -9-2.7 -8-3.1 -8-4.1 -5-3.2 -4-3.5 -2.8-3.5 -2.1-4 -2.4-6 -1.9-7 -2.4-16 -1-18 0.1-22 1.1-24 2.1-21 -0.1-7 -2.7-10 -1.8-15 -1-21 -0.2-29 1.1-36 1.4-12 2.1-10 2.4-7 3.1-5.2 4-3.4 6-2.6 9-2.2 11-1.4 33.7-1.2" stroke="#ff9100"/><path d="M400.8 90l30.2-0.1 22 0.6 13 1.3 9 2.6 6 4.1 4.6 6.5 3.9 10 3 13 2.2 16 1.8 20 1 21 0.1 19 -1.2 19 -2.6 17 0 11 -3.8 0.7 -0.5 0.3 -0.3 2 -0.1 28 0.3 5 4.6 2.4 1.8 1.6 1.3 3 1 5 0.9 11 0.3 12 -0.5 12 -1.2 11 -2 10 -2.8 9 -3.5 7 -4.7 6 -5.6 4.8 -7 3.8 -8 2.9 -10 2.3 -20 2.1 -21-0.5 -20-2.9 -17-5 -13-6.3 -4-2.7 -3.7-3.5 -2.7-4 -2.2-5 -3.6-14 -2-18 -0.5-24 0.8-27 2.6-28 0-7 -2.7-9 -1.7-12 -1-17 -0.5-24 0.6-42 1.1-14 1.7-11 2.1-8 2.6-6 3.1-3.7 4-2.4 7-2.3 10-1.9 12-1.1 14.8-0.6" stroke="#ff9d00"/><path d="M393.8 91l28.2-0.4 26 0.4 14 1 10 2 6.3 3 4.6 5 3.9 8 3.3 12 2.5 15 1.9 19 1.3 23 0.2 20 -1.2 23 -2.9 18 0 11 -2.9 1 -1 4 0.2 24 0.6 7 5.6 6 1.5 4 0.8 5 1.1 20 -1.2 20 -1.7 10 -2.4 9 -2.9 7 -3.9 6 -4.7 4.8 -6 4 -8 3.4 -9 2.4 -18 2.5 -21 0.3 -20-2.1 -18-4.2 -14-5.5 -6-3.4 -4-3.1 -2.6-3.1 -2.1-4 -3.8-12 -2.5-18 -0.8-25 0.8-30 2.8-29 -0.1-7 -2.6-8 -1.7-11 -1.1-16 -0.6-21 0.4-45 1-15 1.5-11 1.7-8 2.1-6 2.5-4 3.1-2.6 6-2.4 9-2 10-1.2 13.8-0.8" stroke="#ffa600"/><path d="M388.7 92l24.3-0.5 30 0.2 16 0.8 11 1.6 7 2.8 4.4 4.1 3.3 6 3.2 10 2.6 14 2 18 1.5 24 0.5 22 -0.9 22 -1.3 12 -2.3 11 0 11 -1.8 1 -1.2 4 0.2 22 0.9 9 5.3 8 1.8 8 1.1 18 -1 19 -1.5 11 -2.3 9 -2.7 7 -3.7 6 -4.1 4.3 -5 3.6 -7 3.2 -8 2.4 -18 2.9 -20 0.6 -20-1.4 -19-3.8 -16-5.6 -6-3.1 -4-2.8 -3-3.3 -1.7-3 -3.4-10 -1.7-9 -1.2-10 -0.9-25 0.8-31 1.2-16 1.7-14 -0.1-7 -2.5-7 -1.7-10 -1.2-15 -0.6-20 0.2-46 0.8-15 1.3-12 1.4-8 2.1-7 2.1-4 2.4-2.4 5-2.4 8-2 10-1.4 11.7-0.8" stroke="#ffae00"/><path d="M384.3 93l22.7-0.7 31 0.1 18 0.6 12 1.4 7 2.1 4 2.7 3.9 5.8 2.8 8 2.8 13 2.2 18 1.6 24 0.6 23 -0.3 16 -1 14 -1.4 10 -2 9 -0.1 11 -1.5 2 -0.6 3 0.3 21 1 10 4.7 9 1.8 8 0.9 16 -0.5 17 -1.1 10 -1.8 9 -2.5 8 -3 6 -3.9 5 -4.9 4 -6 3 -7 2.4 -16 3 -20 1.2 -20-0.9 -19-2.8 -16-4.6 -7-2.8 -6-3.3 -3-2.5 -2.1-2.7 -3.5-9 -2.9-16 -1.4-22 0.8-40 1.2-16 1.8-14 -0.2-7 -2.4-6 -1.8-10 -1.7-24 -0.2-51 0.6-18 1.2-14 1.5-9 1.8-7 1.7-4 2.6-3 4-2 7-1.8 19.3-2.2" stroke="#ffb700"/><path d="M380.5 94l21.5-0.8 32 0 20 0.5 13 1.2 7 1.8 4 2.4 3.6 4.9 2.6 7 2.8 13 2.1 17 1.5 23 0.7 24 -0.2 17 -0.9 14 -1.7 12 -2.2 9 0 11 -1 2 -0.4 3 0.4 19 0.9 11 4.5 11 1.6 8 1 15 -0.5 16 -1 10 -1.5 9 -2.3 8 -2.8 6 -3.2 4.4 -4 3.6 -5 2.9 -7 2.6 -16 3.3 -19 1.3 -20-0.5 -19-2.4 -17-4.1 -13-5.3 -3-1.9 -2.8-2.9 -1.8-3 -1.8-5 -3.1-16 -1.4-22 -0.1-20 0.8-22 1.3-17 1.9-13 -0.3-7 -2.2-5 -1.9-9 -1.8-23 -0.4-49 0.5-20 1-15 2.7-16 1.7-5 2.1-3 2.6-1.7 6-1.9 8-1.4 10.5-1" stroke="#ffbf00"/><path d="M404 94l47 0.3 13 0.9 8 1.4 5 2.4 2.7 3 2.7 6 2.4 10 2.1 14 1.5 18 1.1 23 0.3 21 -0.4 15 -1.1 13 -1.6 10 -2.3 8 0 11 -0.7 4 0 5 1.4 25 4.6 14 1.5 10 0.6 17 -1 17 -1.4 10 -2 8 -2.3 6 -3.2 5 -3.9 3.8 -5 2.9 -7 2.6 -8 1.9 -19 2.2 -21 0.2 -21-1.8 -18-3.6 -14-4.6 -7-4.2 -2-2.4 -1.5-3 -2.9-11 -2.2-20 -0.5-28 1.4-33 2.8-23 -0.4-6 -1.7-3 -1.2-4 -1.9-12 -1.2-17 -0.5-24 0.6-47 1-15 1.7-12 2.7-9 1.8-2.1 4-1.9 7-1.6 10-1.2 29-1.2" stroke="#ffc800"/><path d="M393.1 95l50.9-0.1 15 0.6 10 1.1 6 1.8 3 2.3 2.5 4.3 1.8 6 2.4 13 1.8 17 1.3 23 0.5 24 -0.4 18 -1.1 15 -1.8 11 -2.5 8 0.1 17 1.5 27 4.1 15 1.5 10 0.6 14 -0.4 15 -1 10 -1.6 9 -2.1 7 -2.3 5 -3.1 4 -3.8 2.9 -5 2.5 -7 2.2 -16 2.6 -20 1.1 -20-0.7 -19-2.3 -16-3.7 -12-4.6 -2.8-2 -1.7-2 -3-8 -1.7-9 -1.2-11 -0.8-29 1.4-37 1.1-12 1.9-12 -0.6-6 -2.7-6 -1.9-10 -1.2-15 -0.6-21 0.2-50 0.8-16 1.4-13 2.5-11 1.9-2.7 2-1.2 6-1.6 8-1.2 23.1-1.3" stroke="#ffcf00"/><path d="M385.8 96l52.2-0.4 18 0.5 11 0.9 6 1.2 3.6 1.8 2.3 3 1.8 5 2.4 12 1.8 17 1.3 25 0.5 25 -0.3 17 -0.8 14 -1.9 13 -3 9 0 11 2.4 33 3.9 16 1.3 9 0.6 13 -0.3 14 -2.1 19 -1.7 7 -1.9 5 -2.5 4 -3.4 3.2 -4 2.2 -6 2.2 -14 2.7 -19 1.4 -20-0.1 -19-1.6 -18-3.3 -14-4.3 -5.2-3.4 -1.4-2 -1.5-4 -1.9-9 -1.4-11 -0.9-30 1.4-39 1.3-13 2-11 -1.1-6 -2.7-6 -1.5-8 -1.2-14 -0.8-20 0.1-50 1.7-30 2.3-13 0.8-2 2-2 4-1.4 7-1.2 19.8-1.4" stroke="#ffd700"/><path d="M379.8 97l50.2-0.6 35 1 6 0.8 4 1.3 2.7 2.5 1.6 4 2.4 12 1.8 18 1.3 26 0.4 26 -0.4 17 -0.9 14 -2 13 -1.6 5 -1.5 3 0.1 11 1.5 7 1.9 27 3.1 14 1.2 8 0.8 13 -0.1 14 -1.5 18 -1.3 7 -1.8 6 -2 4 -2.7 3.3 -3 2.1 -5 2.1 -13 2.9 -18 1.7 -20 0.3 -20-1.2 -19-2.8 -15-3.8 -6-3 -2.1-2.6 -1.2-3 -1.9-9 -1.4-12 -0.8-31 1.6-40 1.5-13 2-9 -0.6-4 -2.8-5 -1.5-6 -1.4-10 -0.9-13 -0.6-53 0.4-24 1-17 2-14 1-3 1.7-1.7 9-2 15.8-1.3" stroke="#ffde00"/><path d="M374.3 98l40.7-0.8 46 0.6 8 0.7 5 1.1 2.4 1.4 1.6 3 2.3 11 1.9 19 1.2 28 0.3 28 -0.5 18 -1.3 15 -2.1 11 -2.7 6 -0.4 6 0.4 5 1.1 2 0.9 4 2.3 28 3.7 21 0.8 13 0.1 14 -1.4 19 -1.2 7 -1.7 6 -2 4 -1.7 2.1 -3 2.3 -4 1.7 -12 2.8 -17 1.7 -20 0.5 -20-0.9 -19-2.2 -16-3.5 -7-2.6 -2.1-1.9 -1.4-3 -1.9-9 -1.4-13 -0.7-33 1.8-40 1.5-12 2.1-7 0.1-2 -0.5-3 -1.1-2 -1.5-1 -1.9-6 -1.4-9 -1-12 -0.9-47 1.1-48 1.4-14 1.8-6.5 1-0.9 4-1 15.3-1.6" stroke="#ffe600"/><path d="M418 98l37 0.3 17 1.3 3 0.8 1.7 1.6 2 8 1.6 15 1.3 23 0.6 28 -0.3 24 -0.7 15 -1.4 12 -1.7 8 -3.1 7 -0.5 4 3.6 12 2.3 27 3.4 22 0.8 18 -0.5 19 -2 16 -1.4 5 -1.9 4 -2.8 2.8 -3 1.6 -12 2.9 -19 1.9 -22 0.5 -21-1 -20-2.4 -12-2.4 -7-2.5 -1.6-1.4 -1.1-2 -1.8-8 -1.3-12 -0.7-15 0.3-37 2.2-31 1.2-7 1.9-5 0.4-3 -1.1-4 -1.4-1.5 -2-0.6 -1.1-3.9 -1.6-11 -1.1-16 -0.6-30 0.2-40 0.9-23 1.6-15 0.6-2 1.1-1 9-1.6 20-1.1 34-0.3" stroke="#ffec01"/><path d="M389 99l45-0.1 29 0.5 11 1.1 2 1.2 0.6 1.3 2 13 1.3 23 0.8 34 -0.3 28 -1 17 -1.8 13 -2 7 -0.6 1.2 -2.1 1.8 -1.1 4 0.8 4 2.7 3 0.8 2 1.4 7 1.9 24 3.2 24 0.6 26 -1.1 18 -2.3 12 -1.2 3 -1.6 2.1 -2 1.5 -4 1.6 -12 2.2 -18 1.5 -20 0.4 -20-0.7 -19-1.8 -16-2.8 -6-2 -1.9-2 -0.7-2 -1.8-11 -1.1-16 -0.3-19 0.5-23 1-20 1.5-15 1.4-7 2.2-4 0.8-3 -0.6-3 -1.2-2 -1.8-1.6 -3-0.8 -1.5-8.6 -1.1-13 -0.8-26 -0.1-36 0.6-31 1.2-19 0.9-5 1.8-1.1 12-1.2 21-0.7" stroke="#fff106"/><path d="M376.5 100l80.5-0.1 15 0.7 3 0.6 0.8 0.8 1.8 13 1.2 29 0.4 37 -0.7 28 -1.4 16 -2 11 -3.1 1.3 -2 1.7 -1.5 3 -0.4 3 0.4 3 1.6 3 2.2 2 2.7 0.8 1.2 5.2 4.9 49 0.7 25 -0.7 18 -1.7 12 -2.3 6 -2.1 1.8 -2 0.9 -10 2 -16 1.5 -21 0.7 -20-0.3 -20-1.4 -17-2.3 -9-2.3 -1.9-2.6 -1.8-12 -1-19 -0.1-24 1-27 1.2-17 1.6-11 1-3.4 2-0.9 1.5-1.7 1.1-4 -0.8-4 -2-3 -2.8-2.1 -4-1 -1.3-11.9 -1-21 -0.4-30 0.3-40 1-25 0.8-7 0.6-0.6 21.5-1.4" stroke="#fff60b"/><path d="M364.9 101l85.1-0.4 20 0.4 5 0.5 0.5 0.5 1.5 21 0.7 43 -0.3 32 -1.3 23 -1.1 9.1 -5 1.1 -4 3 -2.8 4.8 -0.9 5 0.8 5 2.9 5 4 3.1 5 1.2 1.1 8.7 3.8 44 0.5 28 -0.6 14 -1.3 10 -1.4 5 -1.1 1.3 -2 1.2 -8 1.8 -15 1.3 -20 0.8 -20 0 -19-0.8 -18-1.7 -12-2 -2-0.7 -1.2-1.2 -1.1-5 -0.8-8 -0.9-24 0.4-30 1.5-28 2.1-16.4 4-1.2 2.6-2.4 2-4 0.5-4 -1.1-5 -3.3-5 -4.7-3.1 -5-1.1 -1.1-16.8 -0.6-23 0.3-68 1-21 1.4-0.5 8.9-0.5" stroke="#fffb10"/><path d="M354.8 102l60.2-0.7 48 0.2 12.2 0.5 1.1 68 -0.3 26 -1 20.4 -4 0.5 -4 1.4 -4 2.4 -3.6 3.3 -2.9 4 -2 4 -1.1 4 -0.6 5 0.4 5 1.1 4 1.8 4 2.9 4.1 3 2.9 4 2.6 4 1.5 5 0.7 3.4 43.2 0.7 25 -0.3 15 -0.9 12 -1.1 6 -1.8 2.5 -7 1.5 -14 1.2 -41 0.9 -20-0.6 -18-1.3 -13-1.7 -2-0.6 -0.9-0.9 -0.9-5 -0.8-11 -0.5-30 1-35 2.1-25 6.7-2 4.9-4 3.4-6 1.2-7 -0.4-4 -1.1-4 -1.9-4 -3-4 -2.8-2.7 -4-2.5 -4-1.5 -4-0.5 -0.9-44.8 0.7-73" stroke="#ffff19"/><path d="M396.3 130l8.7-0.9 8 0.5 9 2.2 8 3.5 8 5.1 6.2 5.6 4.8 6.3 3.1 6.7 1.3 8 -0.9 9 -2.5 9 -8 21.5 -3.5 11.5 -1.7 10 0.1 10 1.6 8 3.1 8 3.4 6 4.9 6 5.8 5 6.3 3.6 6 2.1 7 1 2.2 34.3 0.6 25 -0.8 24 -0.8 6 -1.2 1.9 -7 1.2 -14 0.9 -42 0.8 -37-1.4 -12-1.2 -3-0.5 -0.7-0.7 -1.2-15 -0.4-27 0.8-31 1.5-25 6-0.9 5-2 5-3.2 5.1-4.9 3.6-5 2.9-6 1.6-6 0.4-6 -0.6-6 -1.7-6 -2.7-6 -4.6-7 -14-15.7 -6-4.4 -5-1.9 0-42.2 25-11.8 9-3.2 7.3-1.8" stroke="#ffff3f"/><path d="M406.5 263l6.5-0.7 7 2 7 4.4 17 14.6 9 6.2 11 4.8 11 1.8 1.5 46.9 -0.4 19 -0.6 6 -0.5 0.5 -25 1.3 -40 0.7 -35-1 -13-0.8 -2.4-0.7 -0.8-14 -0.2-24 1.4-47.3 7-1 9-3.1 9-4.3 15-8.6 6.5-2.7" stroke="#ffff65"/><path d="M396.7 294l7.3-0.6 6 0.4 6 1.3 6 2.4 11 6.8 16 13.8 9 6.6 9 4.5 8 1.8 0.1 37 -66.1 1.2 -49-1 -0.6-28.2 0.6-37 7-1.1 19-5.6 10.7-2.3" stroke="#ffff91"/><path d="M490 0C484 18 481 36 480 56" stroke="#000a8c"/><path d="M505 467C509 520 535 560 566 593" stroke="#000a8c"/><path d="M369 396.5l2 -2M371 389.5h1M374 378.5h1M354 206.5h1M351 202.5l-2 -2M334 253.5h1M486 253.5h2M313 126.5h2M312 120.5h2M347 321.5h2M357 324.5h1M354 322.5h1M351 321.5h1M347 319.5l-2 -2M344 318.5h2M338 315.5h1M458 373.5h1M307 285.5h1M359 389.5l2 -2M311 160.5h1M314 157.5h2M317 153.5h1M320 149.5h1M326 141.5h1M329 137.5h2M530 258.5h2M447 88.5l-2 -2M446 82.5l-2 -2M445 76.5h1M442 64.5h2M418 94.5h2M352 180.5h1M349 178.5h1M346 176.5h1M343 174.5h1M338 164.5h1M337 160.5h1M335 157.5h1M334 154.5h1M314 227.5h2M325 221.5h1M329 219.5h2M332 217.5h1M340 213.5h2M343 212.5h2M324 271.5l2 -2M329 269.5h2M333 267.5l2 -2M379 96.5h1M380 92.5l2 -2M381 89.5l2 -2M328 370.5l2 -2M329 365.5h1M330 361.5h2M331 356.5l2 -2M332 351.5h1M333 347.5h1M335 342.5h1M336 337.5h1M473 65.5l2 -2M476 61.5l2 -2M376 94.5h2M364 89.5h1M358 87.5h1M352 85.5h1M346 82.5h2M485 292.5h1M488 289.5h1M327 143.5h2M325 131.5h1M324 126.5h1M323 120.5l-2 -2M478 117.5l2 -2M486 111.5h2M489 108.5h2M495 104.5h1M498 102.5h1M313 254.5h2M317 252.5h2M320 250.5l2 -2M324 247.5h1M350 304.5h1M349 301.5h1M347 297.5h2M345 290.5h2M342 283.5l-2 -2M341 280.5h2M340 277.5h1M314 348.5h1M317 343.5h2M320 338.5h1M323 333.5h1M326 328.5h2M328 322.5h2M333 296.5l2 -2M337 282.5h1M412 78.5h1M421 72.5h1M426 70.5h1M430 67.5h1M440 62.5h1M444 59.5h1M312 179.5h1M309 176.5h1M360 92.5h2M356 90.5l-2 -2M352 87.5h1M344 83.5h1M310 140.5h2M309 134.5h1M308 129.5l-2 -2M307 123.5l-2 -2M377 100.5h2M379 95.5h1M381 91.5h1M383 87.5l2 -2M385 83.5l2 -2M311 156.5h1M307 152.5h2M345 108.5h2M342 104.5h1M367 101.5l-2 -2M352 342.5h1M346 339.5h2M341 337.5h2M465 379.5h1M485 93.5h2M481 91.5h1M477 89.5h2M469 86.5h1M466 85.5l-2 -2M378 393.5h1M307 244.5h1M311 242.5h1M314 239.5h2M477 129.5h1M478 123.5h1M479 116.5h1M480 110.5h1M355 85.5h1M350 83.5h2M345 81.5l-2 -2M352 348.5h1M350 343.5h1M348 339.5h1M347 334.5h2M482 289.5l-2 -2M479 286.5h1M319 354.5h2M315 141.5h1M318 137.5l2 -2M321 133.5h1M328 125.5h1M331 121.5l2 -2M332 336.5h1M329 334.5l-2 -2M323 330.5l-2 -2M320 328.5h1M317 327.5h2M311 323.5h1M341 219.5h1M364 87.5h2M360 83.5h2M353 74.5h2M489 121.5l2 -2M492 113.5h2M494 105.5l2 -2M495 102.5h1M497 98.5h1M315 260.5h1M406 94.5h1M357 329.5h1M486 289.5h1M489 287.5h2M445 100.5h2M446 96.5h2M339 377.5h1M379 95.5h1M328 245.5h1M336 236.5h1M340 232.5h1M409 75.5l2 -2M415 73.5h1M420 70.5h1M425 68.5h1M431 66.5h1M323 210.5l2 -2M327 208.5h1M330 205.5h1M334 202.5h1M384 388.5h2M387 384.5l2 -2M326 375.5h1M323 348.5h1M328 343.5h1M337 334.5h1M341 329.5h2M342 390.5h1M338 381.5h1M336 376.5h2M347 186.5h1M344 182.5l-2 -2M341 177.5l-2 -2M346 351.5h1M349 346.5l2 -2M341 356.5h1M337 355.5h1M333 353.5h1M326 213.5h1M329 211.5h1M332 208.5h2M335 206.5h1M338 203.5h1M341 201.5h1M344 198.5h1M480 129.5h2M478 124.5h2M353 383.5h1M350 381.5h1M347 379.5h2M344 377.5h1M464 61.5h1M411 63.5l2 -2M413 58.5h1M307 317.5l2 -2M469 99.5h1M468 96.5h1M467 85.5l-2 -2M465 74.5h2M464 71.5l-2 -2M464 67.5h2M463 64.5h1M351 247.5h1M353 242.5h1M340 389.5h1M344 383.5h2M345 379.5h2M336 289.5l2 -2M340 287.5h1M346 283.5h1M349 281.5h1M352 278.5h1M356 276.5h1M359 274.5l2 -2M342 225.5h2M347 222.5l2 -2M352 218.5h1M490 127.5h2M478 132.5l-2 -2M464 380.5l-2 -2M321 283.5h1M324 281.5h2M316 211.5l2 -2M322 206.5h2M330 198.5h1M337 375.5h2M348 368.5l2 -2M328 159.5h2M462 379.5h2M465 373.5h2M437 82.5h1M438 78.5h1M438 73.5h1M447 58.5h1M362 82.5l-2 -2M358 78.5h1M444 73.5h1M450 66.5h1M453 62.5h2M495 100.5l-2 -2M349 331.5h1M351 327.5h1M332 98.5h1M333 92.5l2 -2M323 353.5h1M326 351.5l2 -2M334 347.5h1M341 344.5h1M308 270.5h1M333 358.5h1M336 354.5h1M339 349.5h2M342 344.5h1M345 340.5h1M348 335.5h1M354 326.5h2M325 361.5h1M322 355.5h2M359 319.5h2M307 302.5h1M428 70.5l-2 -2M426 65.5h2M476 369.5h1M352 97.5h2M349 93.5h1M345 89.5h1M342 84.5h1M398 67.5h2M395 63.5l-2 -2M410 63.5h1M408 59.5l-2 -2M324 363.5h1M327 358.5l2 -2M332 347.5h2M408 62.5l-2 -2M404 60.5h2M342 124.5h2M345 118.5l2 -2M347 112.5h2M350 106.5h2M487 103.5h1M484 98.5h1M481 93.5h1M478 89.5h1M323 205.5h1M327 203.5h1M331 201.5h1M334 232.5h2M338 231.5l2 -2M341 229.5l2 -2M345 228.5h2M348 226.5l2 -2M352 225.5h1M321 144.5h1M325 141.5h2M328 138.5h1M331 135.5l2 -2M341 125.5h2M354 130.5h2M352 123.5h1M350 117.5l-2 -2M348 111.5h1M346 105.5h2M311 324.5l2 -2M317 320.5l2 -2M320 318.5h1M323 316.5h1M330 312.5l2 -2M333 310.5h1M336 308.5h1M309 348.5h1M345 124.5h2M339 121.5l-2 -2M334 119.5h2M341 86.5h1M478 355.5h2M531 253.5h1M342 98.5h2M347 95.5h1M351 93.5h2M356 90.5h1M360 88.5l2 -2M365 85.5h1M464 79.5h1M472 74.5l2 -2M477 71.5l2 -2M481 68.5h1M453 71.5h2M459 59.5h1M469 95.5l2 -2M471 91.5h1M477 79.5h1M479 75.5h1M481 71.5h1M485 64.5l2 -2M313 151.5h1M312 145.5l-2 -2M383 372.5l2 -2M345 222.5h1M329 213.5h1M332 163.5h2M337 160.5l2 -2M342 156.5l2 -2M347 153.5h2M351 196.5h1M346 191.5h1M341 186.5h2M328 231.5h1M327 225.5h2M326 220.5h1M485 100.5h1M386 388.5h1M385 383.5h1M383 375.5h1M381 371.5h2M352 400.5h2M348 396.5h1M344 391.5h1M339 387.5h2M328 342.5h1M324 339.5h1M316 334.5h1M312 331.5h2M308 329.5h2M343 95.5h1M334 91.5h1M329 89.5h1M442 84.5h1M446 79.5h1M450 74.5l2 -2M388 97.5h1M383 84.5h1M363 93.5h2M361 88.5h2M479 355.5l2 -2M346 213.5h1M352 209.5h1M390 59.5h2M350 362.5h1M355 358.5h1M363 63.5l2 -2M336 231.5h2M340 230.5h2M349 226.5h1M353 224.5h2M356 353.5h1M349 344.5l-2 -2M351 344.5h1M355 339.5h1M359 333.5h1M331 188.5l2 -2M336 185.5l2 -2M340 182.5h1M345 179.5h2M332 278.5l2 -2M335 264.5l2 -2M337 255.5l2 -2M339 245.5h2M459 374.5h2M360 360.5l2 -2M317 324.5h2M312 319.5l-2 -2M318 125.5h2M309 117.5h1M402 86.5h1M407 81.5h1M413 77.5h1M418 72.5h2M424 68.5h2M485 88.5l-2 -2M485 85.5l-2 -2M484 81.5h2M329 101.5h1M327 97.5h1M422 99.5h2M419 95.5h1M417 92.5h1M415 89.5h2M320 355.5h1M323 351.5h2M327 346.5h1M318 348.5l2 -2M318 344.5h1M320 337.5h1M320 333.5l2 -2M322 325.5h2M346 220.5h1M354 240.5h1M346 231.5l-2 -2M343 229.5h1M341 226.5h1M338 223.5h1M336 220.5l-2 -2M333 217.5h1M423 74.5h1M419 70.5h1M415 67.5l-2 -2M410 64.5l-2 -2M406 60.5h1M430 88.5h2M432 79.5h1M433 74.5l2 -2M483 355.5h1M486 354.5h2M441 81.5h1M439 76.5l-2 -2M435 66.5h2M433 62.5h2M396 68.5h2M418 79.5l-2 -2M414 76.5h1M410 73.5h1M406 70.5h1M402 68.5h1M343 102.5h1M344 95.5l2 -2M345 89.5h1M346 82.5l2 -2M509 260.5h2M330 283.5h1M334 281.5h1M338 279.5h1M342 277.5h2M346 275.5l2 -2M351 272.5h1M369 397.5l-2 -2M365 392.5h2M362 386.5l-2 -2M369 97.5l-2 -2M366 88.5h2M365 83.5l-2 -2M363 79.5l-2 -2M308 236.5l2 -2M309 233.5h1M311 229.5h2M314 221.5h1M315 218.5l2 -2M317 214.5h2M318 210.5h1M320 207.5h1M480 131.5l-2 -2M478 126.5h1M476 121.5h2M470 99.5h2M354 124.5h2M347 211.5h1M341 208.5h1M336 205.5h1M326 198.5h2M321 194.5h1M316 191.5l-2 -2M351 224.5h1M357 353.5l2 -2M349 243.5h1M356 343.5h1M336 309.5l-2 -2M335 304.5h1M334 299.5h1M380 387.5h2M379 382.5h2M377 376.5l-2 -2M376 371.5h2M351 212.5h1M379 68.5h1M335 377.5h2M337 373.5h1M343 366.5h1M346 363.5h1M349 359.5h1M352 356.5h1M447 84.5h2M445 80.5h1M443 76.5h2M441 72.5l-2 -2M439 68.5h1M368 395.5h1M366 389.5h2M365 382.5h1M363 369.5h1M506 287.5l-2 -2M479 286.5h1M315 170.5h2M321 164.5l2 -2M324 161.5h1M332 152.5l2 -2M335 149.5h2M342 134.5h1M348 131.5h2M354 129.5l2 -2M353 269.5h2M346 263.5h2M343 260.5h1M340 257.5h1M336 254.5h1M493 100.5l-2 -2M483 94.5h1M351 397.5l2 -2M428 58.5l-2 -2M420 90.5h1M418 85.5h1M413 77.5h2M410 72.5h1M324 142.5h1M327 140.5h1M331 137.5l2 -2M334 135.5h2M378 98.5h1M375 92.5h1M313 295.5h1M322 291.5h1M327 290.5h1M483 262.5h1M427 74.5h1M422 71.5h1M461 375.5h1M353 230.5h1M349 226.5h1M321 354.5h1M324 351.5h1M326 347.5l2 -2M328 343.5h2M326 92.5h1M348 264.5h1M347 261.5h1M346 257.5l-2 -2M344 254.5h2M342 246.5h1M341 243.5l-2 -2M340 239.5h1M344 398.5h2M348 394.5h1M351 391.5l2 -2M309 266.5l2 -2M312 263.5h2M315 260.5l2 -2M322 255.5h1M329 250.5l2 -2M345 373.5h1M349 362.5l2 -2M353 351.5h1M355 345.5h2M377 101.5l2 -2M343 374.5h2M337 354.5l-2 -2M325 284.5h2M329 280.5h2M334 276.5h1M339 272.5l2 -2M343 268.5h1M348 264.5l2 -2M353 260.5l2 -2M362 87.5h1M360 82.5h1M433 93.5h1M437 90.5l2 -2M442 87.5h1M450 81.5l2 -2M488 268.5l-2 -2M485 263.5l-2 -2M482 258.5h1M337 201.5h1M341 192.5h2M344 184.5h1M331 289.5h2M339 276.5h1M345 267.5h1M348 263.5h2" stroke="#858585" stroke-opacity="0.85"/></g><g shape-rendering="geometricPrecision"><path d="M475.5 240.5 L563.5 240.5" stroke="#fff" stroke-width="1.5" fill="none" stroke-dasharray="3 1 1 1"/><path d="M475.5 251.5 L533.5 251.5" stroke="#fff" stroke-width="1.5" fill="none" stroke-dasharray="2 1 1 2"/><path d="M549.5 256.5 L565.5 256.5" stroke="#fff" stroke-width="1.5" fill="none" stroke-dasharray="2 1"/><path d="M305.5 252.5 L360.5 252.5" stroke="#fff" stroke-width="1.5" fill="none" stroke-dasharray="6 14 8 10 3 8"/><path d="M490.5 251.5 L490.5 287.5 L504.5 287.5 L504.5 261.5 L490.5 261.5" stroke="#fff" stroke-width="1.5" fill="none" /><path d="M533.5 251.5 L533.5 287.5 L549.5 287.5" stroke="#fff" stroke-width="1.5" fill="none" /><path d="M533.5 261.5 L549.5 261.5" stroke="#fff" stroke-width="1.5" fill="none" /></g><path d="M305 0V593" stroke="#fff" stroke-width="1.6" shape-rendering="geometricPrecision"/><path d="M371.5 57v9" stroke="#b0b0c8" stroke-width="1"/><path d="M373 56.500H481" stroke="#00008c" stroke-width="1"/></svg>
<div class="a" style="left:189px;top:117px;width:210px;height:590px;background:#ebebeb;border:3px solid #fff;border-right-width:2px;box-shadow:inset 0 0 0 1px #000"></div>
<div class="t" style="left:245px;top:124px;font-family:'DejaVu Sans Mono','Liberation Mono',monospace;font-size:8.3px;line-height:10px;font-weight:bold;font-style:italic;color:#222">4_ISOLIN_NO_INFINITE</div>
<div class="t" style="left:191.5px;top:526px;font-family:'DejaVu Sans Mono','Liberation Mono',monospace;font-size:7.95px;line-height:9px;transform-origin:0 0;transform:rotate(-90deg);color:#1a1a1a;font-weight:bold">Vector potential An / Vector potential in Wb/m</div>
<svg class="a" style="left:0;top:0" width="400" height="710" shape-rendering="crispEdges"><rect x="301" y="137" width="44" height="562" fill="#808080"/><rect x="345" y="137" width="46" height="9" fill="#ffffbe"/><rect x="301" y="137" width="91" height="1" fill="#000"/><rect x="345" y="146" width="46" height="10" fill="#ffff91"/><rect x="301" y="146" width="91" height="1" fill="#000"/><rect x="345" y="156" width="46" height="9" fill="#ffff65"/><rect x="301" y="156" width="91" height="1" fill="#000"/><rect x="345" y="165" width="46" height="9" fill="#ffff3f"/><rect x="301" y="165" width="91" height="1" fill="#000"/><rect x="345" y="174" width="46" height="10" fill="#ffff19"/><rect x="301" y="174" width="91" height="1" fill="#000"/><rect x="345" y="184" width="46" height="9" fill="#fffb10"/><rect x="301" y="184" width="91" height="1" fill="#000"/><rect x="345" y="193" width="46" height="10" fill="#fff60b"/><rect x="301" y="193" width="91" height="1" fill="#000"/><rect x="345" y="203" width="46" height="9" fill="#fff106"/><rect x="301" y="203" width="91" height="1" fill="#000"/><rect x="345" y="212" width="46" height="9" fill="#ffec01"/><rect x="301" y="212" width="91" height="1" fill="#000"/><rect x="345" y="221" width="46" height="10" fill="#ffe600"/><rect x="301" y="221" width="91" height="1" fill="#000"/><rect x="345" y="231" width="46" height="9" fill="#ffde00"/><rect x="301" y="231" width="91" height="1" fill="#000"/><rect x="345" y="240" width="46" height="9" fill="#ffd700"/><rect x="301" y="240" width="91" height="1" fill="#000"/><rect x="345" y="249" width="46" height="10" fill="#ffcf00"/><rect x="301" y="249" width="91" height="1" fill="#000"/><rect x="345" y="259" width="46" height="9" fill="#ffc800"/><rect x="301" y="259" width="91" height="1" fill="#000"/><rect x="345" y="268" width="46" height="9" fill="#ffbf00"/><rect x="301" y="268" width="91" height="1" fill="#000"/><rect x="345" y="277" width="46" height="10" fill="#ffb700"/><rect x="301" y="277" width="91" height="1" fill="#000"/><rect x="345" y="287" width="46" height="9" fill="#ffae00"/><rect x="301" y="287" width="91" height="1" fill="#000"/><rect x="345" y="296" width="46" height="9" fill="#ffa600"/><rect x="301" y="296" width="91" height="1" fill="#000"/><rect x="345" y="305" width="46" height="10" fill="#ff9d00"/><rect x="301" y="305" width="91" height="1" fill="#000"/><rect x="345" y="315" width="46" height="9" fill="#ff9100"/><rect x="301" y="315" width="91" height="1" fill="#000"/><rect x="345" y="324" width="46" height="10" fill="#ff8600"/><rect x="301" y="324" width="91" height="1" fill="#000"/><rect x="345" y="334" width="46" height="9" fill="#ff7b00"/><rect x="301" y="334" width="91" height="1" fill="#000"/><rect x="345" y="343" width="46" height="9" fill="#ff6e02"/><rect x="301" y="343" width="91" height="1" fill="#000"/><rect x="345" y="352" width="46" height="10" fill="#ff6205"/><rect x="301" y="352" width="91" height="1" fill="#000"/><rect x="345" y="362" width="46" height="9" fill="#ff5508"/><rect x="301" y="362" width="91" height="1" fill="#000"/><rect x="345" y="371" width="46" height="9" fill="#ff480d"/><rect x="301" y="371" width="91" height="1" fill="#000"/><rect x="345" y="380" width="46" height="10" fill="#ff381b"/><rect x="301" y="380" width="91" height="1" fill="#000"/><rect x="345" y="390" width="46" height="9" fill="#ff2928"/><rect x="301" y="390" width="91" height="1" fill="#000"/><rect x="345" y="399" width="46" height="9" fill="#ff1b36"/><rect x="301" y="399" width="91" height="1" fill="#000"/><rect x="345" y="408" width="46" height="10" fill="#fd1143"/><rect x="301" y="408" width="91" height="1" fill="#000"/><rect x="345" y="418" width="46" height="9" fill="#fb0751"/><rect x="301" y="418" width="91" height="1" fill="#000"/><rect x="345" y="427" width="46" height="10" fill="#f8005e"/><rect x="301" y="427" width="91" height="1" fill="#000"/><rect x="345" y="437" width="46" height="9" fill="#f10069"/><rect x="301" y="437" width="91" height="1" fill="#000"/><rect x="345" y="446" width="46" height="9" fill="#ea0074"/><rect x="301" y="446" width="91" height="1" fill="#000"/><rect x="345" y="455" width="46" height="10" fill="#e30080"/><rect x="301" y="455" width="91" height="1" fill="#000"/><rect x="345" y="465" width="46" height="9" fill="#d9008b"/><rect x="301" y="465" width="91" height="1" fill="#000"/><rect x="345" y="474" width="46" height="9" fill="#cf0096"/><rect x="301" y="474" width="91" height="1" fill="#000"/><rect x="345" y="483" width="46" height="10" fill="#c600a1"/><rect x="301" y="483" width="91" height="1" fill="#000"/><rect x="345" y="493" width="46" height="9" fill="#bb00ac"/><rect x="301" y="493" width="91" height="1" fill="#000"/><rect x="345" y="502" width="46" height="9" fill="#b000b5"/><rect x="301" y="502" width="91" height="1" fill="#000"/><rect x="345" y="511" width="46" height="10" fill="#a500bd"/><rect x="301" y="511" width="91" height="1" fill="#000"/><rect x="345" y="521" width="46" height="9" fill="#9900c5"/><rect x="301" y="521" width="91" height="1" fill="#000"/><rect x="345" y="530" width="46" height="9" fill="#8d02cd"/><rect x="301" y="530" width="91" height="1" fill="#000"/><rect x="345" y="539" width="46" height="10" fill="#7f06d4"/><rect x="301" y="539" width="91" height="1" fill="#000"/><rect x="345" y="549" width="46" height="9" fill="#7109da"/><rect x="301" y="549" width="91" height="1" fill="#000"/><rect x="345" y="558" width="46" height="10" fill="#5f0add"/><rect x="301" y="558" width="91" height="1" fill="#000"/><rect x="345" y="568" width="46" height="9" fill="#4a0adf"/><rect x="301" y="568" width="91" height="1" fill="#000"/><rect x="345" y="577" width="46" height="9" fill="#360ae1"/><rect x="301" y="577" width="91" height="1" fill="#000"/><rect x="345" y="586" width="46" height="10" fill="#270ada"/><rect x="301" y="586" width="91" height="1" fill="#000"/><rect x="345" y="596" width="46" height="9" fill="#1a0ad2"/><rect x="301" y="596" width="91" height="1" fill="#000"/><rect x="345" y="605" width="46" height="9" fill="#0c0ac9"/><rect x="301" y="605" width="91" height="1" fill="#000"/><rect x="345" y="614" width="46" height="10" fill="#0808be"/><rect x="301" y="614" width="91" height="1" fill="#000"/><rect x="345" y="624" width="46" height="9" fill="#0606b2"/><rect x="301" y="624" width="91" height="1" fill="#000"/><rect x="345" y="633" width="46" height="9" fill="#0303a5"/><rect x="301" y="633" width="91" height="1" fill="#000"/><rect x="345" y="642" width="46" height="10" fill="#010199"/><rect x="301" y="642" width="91" height="1" fill="#000"/><rect x="345" y="652" width="46" height="9" fill="#000090"/><rect x="301" y="652" width="91" height="1" fill="#000"/><rect x="345" y="661" width="46" height="10" fill="#000087"/><rect x="301" y="661" width="91" height="1" fill="#000"/><rect x="345" y="671" width="46" height="9" fill="#00007f"/><rect x="301" y="671" width="91" height="1" fill="#000"/><rect x="345" y="680" width="46" height="9" fill="#000076"/><rect x="301" y="680" width="91" height="1" fill="#000"/><rect x="345" y="689" width="46" height="10" fill="#00006e"/><rect x="301" y="689" width="91" height="1" fill="#000"/></svg>
<div class="t" style="left:200px;width:91px;text-align:right;top:134.4px;font-family:'Liberation Mono','DejaVu Sans Mono',monospace;font-size:13.4px;line-height:15px;color:#1c1c1c;transform:scaleY(1.22);transform-origin:0 50%">75.213E-3</div>
<div class="t" style="left:200px;width:91px;text-align:right;top:143.8px;font-family:'Liberation Mono','DejaVu Sans Mono',monospace;font-size:13.4px;line-height:15px;color:#1c1c1c;transform:scaleY(1.22);transform-origin:0 50%">73.938E-3</div>
<div class="t" style="left:200px;width:91px;text-align:right;top:153.1px;font-family:'Liberation Mono','DejaVu Sans Mono',monospace;font-size:13.4px;line-height:15px;color:#1c1c1c;transform:scaleY(1.22);transform-origin:0 50%">72.663E-3</div>
<div class="t" style="left:200px;width:91px;text-align:right;top:162.5px;font-family:'Liberation Mono','DejaVu Sans Mono',monospace;font-size:13.4px;line-height:15px;color:#1c1c1c;transform:scaleY(1.22);transform-origin:0 50%">71.389E-3</div>
<div class="t" style="left:200px;width:91px;text-align:right;top:171.8px;font-family:'Liberation Mono','DejaVu Sans Mono',monospace;font-size:13.4px;line-height:15px;color:#1c1c1c;transform:scaleY(1.22);transform-origin:0 50%">70.114E-3</div>
<div class="t" style="left:200px;width:91px;text-align:right;top:181.2px;font-family:'Liberation Mono','DejaVu Sans Mono',monospace;font-size:13.4px;line-height:15px;color:#1c1c1c;transform:scaleY(1.22);transform-origin:0 50%">68.839E-3</div>
<div class="t" style="left:200px;width:91px;text-align:right;top:190.6px;font-family:'Liberation Mono','DejaVu Sans Mono',monospace;font-size:13.4px;line-height:15px;color:#1c1c1c;transform:scaleY(1.22);transform-origin:0 50%">67.564E-3</div>
<div class="t" style="left:200px;width:91px;text-align:right;top:199.9px;font-family:'Liberation Mono','DejaVu Sans Mono',monospace;font-size:13.4px;line-height:15px;color:#1c1c1c;transform:scaleY(1.22);transform-origin:0 50%">66.289E-3</div>
<div class="t" style="left:200px;width:91px;text-align:right;top:209.3px;font-family:'Liberation Mono','DejaVu Sans Mono',monospace;font-size:13.4px;line-height:15px;color:#1c1c1c;transform:scaleY(1.22);transform-origin:0 50%">65.015E-3</div>
<div class="t" style="left:200px;width:91px;text-align:right;top:218.6px;font-family:'Liberation Mono','DejaVu Sans Mono',monospace;font-size:13.4px;line-height:15px;color:#1c1c1c;transform:scaleY(1.22);transform-origin:0 50%">63.740E-3</div>
<div class="t" style="left:200px;width:91px;text-align:right;top:228.0px;font-family:'Liberation Mono','DejaVu Sans Mono',monospace;font-size:13.4px;line-height:15px;color:#1c1c1c;transform:scaleY(1.22);transform-origin:0 50%">62.465E-3</div>
<div class="t" style="left:200px;width:91px;text-align:right;top:237.4px;font-family:'Liberation Mono','DejaVu Sans Mono',monospace;font-size:13.4px;line-height:15px;color:#1c1c1c;transform:scaleY(1.22);transform-origin:0 50%">61.190E-3</div>
<div class="t" style="left:200px;width:91px;text-align:right;top:246.7px;font-family:'Liberation Mono','DejaVu Sans Mono',monospace;font-size:13.4px;line-height:15px;color:#1c1c1c;transform:scaleY(1.22);transform-origin:0 50%">59.915E-3</div>
<div class="t" style="left:200px;width:91px;text-align:right;top:256.1px;font-family:'Liberation Mono','DejaVu Sans Mono',monospace;font-size:13.4px;line-height:15px;color:#1c1c1c;transform:scaleY(1.22);transform-origin:0 50%">58.641E-3</div>
<div class="t" style="left:200px;width:91px;text-align:right;top:265.4px;font-family:'Liberation Mono','DejaVu Sans Mono',monospace;font-size:13.4px;line-height:15px;color:#1c1c1c;transform:scaleY(1.22);transform-origin:0 50%">57.366E-3</div>
<div class="t" style="left:200px;width:91px;text-align:right;top:274.8px;font-family:'Liberation Mono','DejaVu Sans Mono',monospace;font-size:13.4px;line-height:15px;color:#1c1c1c;transform:scaleY(1.22);transform-origin:0 50%">56.091E-3</div>
<div class="t" style="left:200px;width:91px;text-align:right;top:284.2px;font-family:'Liberation Mono','DejaVu Sans Mono',monospace;font-size:13.4px;line-height:15px;color:#1c1c1c;transform:scaleY(1.22);transform-origin:0 50%">54.816E-3</div>
<div class="t" style="left:200px;width:91px;text-align:right;top:293.5px;font-family:'Liberation Mono','DejaVu Sans Mono',monospace;font-size:13.4px;line-height:15px;color:#1c1c1c;transform:scaleY(1.22);transform-origin:0 50%">53.541E-3</div>
<div class="t" style="left:200px;width:91px;text-align:right;top:302.9px;font-family:'Liberation Mono','DejaVu Sans Mono',monospace;font-size:13.4px;line-height:15px;color:#1c1c1c;transform:scaleY(1.22);transform-origin:0 50%">52.267E-3</div>
<div class="t" style="left:200px;width:91px;text-align:right;top:312.2px;font-family:'Liberation Mono','DejaVu Sans Mono',monospace;font-size:13.4px;line-height:15px;color:#1c1c1c;transform:scaleY(1.22);transform-origin:0 50%">50.992E-3</div>
<div class="t" style="left:200px;width:91px;text-align:right;top:321.6px;font-family:'Liberation Mono','DejaVu Sans Mono',monospace;font-size:13.4px;line-height:15px;color:#1c1c1c;transform:scaleY(1.22);transform-origin:0 50%">49.717E-3</div>
<div class="t" style="left:200px;width:91px;text-align:right;top:331.0px;font-family:'Liberation Mono','DejaVu Sans Mono',monospace;font-size:13.4px;line-height:15px;color:#1c1c1c;transform:scaleY(1.22);transform-origin:0 50%">48.442E-3</div>
<div class="t" style="left:200px;width:91px;text-align:right;top:340.3px;font-family:'Liberation Mono','DejaVu Sans Mono',monospace;font-size:13.4px;line-height:15px;color:#1c1c1c;transform:scaleY(1.22);transform-origin:0 50%">47.167E-3</div>
<div class="t" style="left:200px;width:91px;text-align:right;top:349.7px;font-family:'Liberation Mono','DejaVu Sans Mono',monospace;font-size:13.4px;line-height:15px;color:#1c1c1c;transform:scaleY(1.22);transform-origin:0 50%">45.893E-3</div>
<div class="t" style="left:200px;width:91px;text-align:right;top:359.0px;font-family:'Liberation Mono','DejaVu Sans Mono',monospace;font-size:13.4px;line-height:15px;color:#1c1c1c;transform:scaleY(1.22);transform-origin:0 50%">44.618E-3</div>
<div class="t" style="left:200px;width:91px;text-align:right;top:368.4px;font-family:'Liberation Mono','DejaVu Sans Mono',monospace;font-size:13.4px;line-height:15px;color:#1c1c1c;transform:scaleY(1.22);transform-origin:0 50%">43.343E-3</div>
<div class="t" style="left:200px;width:91px;text-align:right;top:377.8px;font-family:'Liberation Mono','DejaVu Sans Mono',monospace;font-size:13.4px;line-height:15px;color:#1c1c1c;transform:scaleY(1.22);transform-origin:0 50%">42.068E-3</div>
<div class="t" style="left:200px;width:91px;text-align:right;top:387.1px;font-family:'Liberation Mono','DejaVu Sans Mono',monospace;font-size:13.4px;line-height:15px;color:#1c1c1c;transform:scaleY(1.22);transform-origin:0 50%">40.793E-3</div>
<div class="t" style="left:200px;width:91px;text-align:right;top:396.5px;font-family:'Liberation Mono','DejaVu Sans Mono',monospace;font-size:13.4px;line-height:15px;color:#1c1c1c;transform:scaleY(1.22);transform-origin:0 50%">39.519E-3</div>
<div class="t" style="left:200px;width:91px;text-align:right;top:405.8px;font-family:'Liberation Mono','DejaVu Sans Mono',monospace;font-size:13.4px;line-height:15px;color:#1c1c1c;transform:scaleY(1.22);transform-origin:0 50%">38.244E-3</div>
<div class="t" style="left:200px;width:91px;text-align:right;top:415.2px;font-family:'Liberation Mono','DejaVu Sans Mono',monospace;font-size:13.4px;line-height:15px;color:#1c1c1c;transform:scaleY(1.22);transform-origin:0 50%">36.969E-3</div>
<div class="t" style="left:200px;width:91px;text-align:right;top:424.6px;font-family:'Liberation Mono','DejaVu Sans Mono',monospace;font-size:13.4px;line-height:15px;color:#1c1c1c;transform:scaleY(1.22);transform-origin:0 50%">35.694E-3</div>
<div class="t" style="left:200px;width:91px;text-align:right;top:433.9px;font-family:'Liberation Mono','DejaVu Sans Mono',monospace;font-size:13.4px;line-height:15px;color:#1c1c1c;transform:scaleY(1.22);transform-origin:0 50%">34.420E-3</div>
<div class="t" style="left:200px;width:91px;text-align:right;top:443.3px;font-family:'Liberation Mono','DejaVu Sans Mono',monospace;font-size:13.4px;line-height:15px;color:#1c1c1c;transform:scaleY(1.22);transform-origin:0 50%">33.145E-3</div>
<div class="t" style="left:200px;width:91px;text-align:right;top:452.6px;font-family:'Liberation Mono','DejaVu Sans Mono',monospace;font-size:13.4px;line-height:15px;color:#1c1c1c;transform:scaleY(1.22);transform-origin:0 50%">31.870E-3</div>
<div class="t" style="left:200px;width:91px;text-align:right;top:462.0px;font-family:'Liberation Mono','DejaVu Sans Mono',monospace;font-size:13.4px;line-height:15px;color:#1c1c1c;transform:scaleY(1.22);transform-origin:0 50%">30.595E-3</div>
<div class="t" style="left:200px;width:91px;text-align:right;top:471.4px;font-family:'Liberation Mono','DejaVu Sans Mono',monospace;font-size:13.4px;line-height:15px;color:#1c1c1c;transform:scaleY(1.22);transform-origin:0 50%">29.320E-3</div>
<div class="t" style="left:200px;width:91px;text-align:right;top:480.7px;font-family:'Liberation Mono','DejaVu Sans Mono',monospace;font-size:13.4px;line-height:15px;color:#1c1c1c;transform:scaleY(1.22);transform-origin:0 50%">28.046E-3</div>
<div class="t" style="left:200px;width:91px;text-align:right;top:490.1px;font-family:'Liberation Mono','DejaVu Sans Mono',monospace;font-size:13.4px;line-height:15px;color:#1c1c1c;transform:scaleY(1.22);transform-origin:0 50%">26.771E-3</div>
<div class="t" style="left:200px;width:91px;text-align:right;top:499.4px;font-family:'Liberation Mono','DejaVu Sans Mono',monospace;font-size:13.4px;line-height:15px;color:#1c1c1c;transform:scaleY(1.22);transform-origin:0 50%">25.496E-3</div>
<div class="t" style="left:200px;width:91px;text-align:right;top:508.8px;font-family:'Liberation Mono','DejaVu Sans Mono',monospace;font-size:13.4px;line-height:15px;color:#1c1c1c;transform:scaleY(1.22);transform-origin:0 50%">24.221E-3</div>
<div class="t" style="left:200px;width:91px;text-align:right;top:518.2px;font-family:'Liberation Mono','DejaVu Sans Mono',monospace;font-size:13.4px;line-height:15px;color:#1c1c1c;transform:scaleY(1.22);transform-origin:0 50%">22.946E-3</div>
<div class="t" style="left:200px;width:91px;text-align:right;top:527.5px;font-family:'Liberation Mono','DejaVu Sans Mono',monospace;font-size:13.4px;line-height:15px;color:#1c1c1c;transform:scaleY(1.22);transform-origin:0 50%">21.672E-3</div>
<div class="t" style="left:200px;width:91px;text-align:right;top:536.9px;font-family:'Liberation Mono','DejaVu Sans Mono',monospace;font-size:13.4px;line-height:15px;color:#1c1c1c;transform:scaleY(1.22);transform-origin:0 50%">20.397E-3</div>
<div class="t" style="left:200px;width:91px;text-align:right;top:546.2px;font-family:'Liberation Mono','DejaVu Sans Mono',monospace;font-size:13.4px;line-height:15px;color:#1c1c1c;transform:scaleY(1.22);transform-origin:0 50%">19.122E-3</div>
<div class="t" style="left:200px;width:91px;text-align:right;top:555.6px;font-family:'Liberation Mono','DejaVu Sans Mono',monospace;font-size:13.4px;line-height:15px;color:#1c1c1c;transform:scaleY(1.22);transform-origin:0 50%">17.847E-3</div>
<div class="t" style="left:200px;width:91px;text-align:right;top:565.0px;font-family:'Liberation Mono','DejaVu Sans Mono',monospace;font-size:13.4px;line-height:15px;color:#1c1c1c;transform:scaleY(1.22);transform-origin:0 50%">16.572E-3</div>
<div class="t" style="left:200px;width:91px;text-align:right;top:574.3px;font-family:'Liberation Mono','DejaVu Sans Mono',monospace;font-size:13.4px;line-height:15px;color:#1c1c1c;transform:scaleY(1.22);transform-origin:0 50%">15.298E-3</div>
<div class="t" style="left:200px;width:91px;text-align:right;top:583.7px;font-family:'Liberation Mono','DejaVu Sans Mono',monospace;font-size:13.4px;line-height:15px;color:#1c1c1c;transform:scaleY(1.22);transform-origin:0 50%">14.023E-3</div>
<div class="t" style="left:200px;width:91px;text-align:right;top:593.0px;font-family:'Liberation Mono','DejaVu Sans Mono',monospace;font-size:13.4px;line-height:15px;color:#1c1c1c;transform:scaleY(1.22);transform-origin:0 50%">12.748E-3</div>
<div class="t" style="left:200px;width:91px;text-align:right;top:602.4px;font-family:'Liberation Mono','DejaVu Sans Mono',monospace;font-size:13.4px;line-height:15px;color:#1c1c1c;transform:scaleY(1.22);transform-origin:0 50%">11.473E-3</div>
<div class="t" style="left:200px;width:91px;text-align:right;top:611.8px;font-family:'Liberation Mono','DejaVu Sans Mono',monospace;font-size:13.4px;line-height:15px;color:#1c1c1c;transform:scaleY(1.22);transform-origin:0 50%">10.198E-3</div>
<div class="t" style="left:200px;width:91px;text-align:right;top:621.1px;font-family:'Liberation Mono','DejaVu Sans Mono',monospace;font-size:13.4px;line-height:15px;color:#1c1c1c;transform:scaleY(1.22);transform-origin:0 50%">8.924E-3</div>
<div class="t" style="left:200px;width:91px;text-align:right;top:630.5px;font-family:'Liberation Mono','DejaVu Sans Mono',monospace;font-size:13.4px;line-height:15px;color:#1c1c1c;transform:scaleY(1.22);transform-origin:0 50%">7.649E-3</div>
<div class="t" style="left:200px;width:91px;text-align:right;top:639.8px;font-family:'Liberation Mono','DejaVu Sans Mono',monospace;font-size:13.4px;line-height:15px;color:#1c1c1c;transform:scaleY(1.22);transform-origin:0 50%">6.374E-3</div>
<div class="t" style="left:200px;width:91px;text-align:right;top:649.2px;font-family:'Liberation Mono','DejaVu Sans Mono',monospace;font-size:13.4px;line-height:15px;color:#1c1c1c;transform:scaleY(1.22);transform-origin:0 50%">5.099E-3</div>
<div class="t" style="left:200px;width:91px;text-align:right;top:658.6px;font-family:'Liberation Mono','DejaVu Sans Mono',monospace;font-size:13.4px;line-height:15px;color:#1c1c1c;transform:scaleY(1.22);transform-origin:0 50%">3.824E-3</div>
<div class="t" style="left:200px;width:91px;text-align:right;top:667.9px;font-family:'Liberation Mono','DejaVu Sans Mono',monospace;font-size:13.4px;line-height:15px;color:#1c1c1c;transform:scaleY(1.22);transform-origin:0 50%">2.550E-3</div>
<div class="t" style="left:200px;width:91px;text-align:right;top:677.3px;font-family:'Liberation Mono','DejaVu Sans Mono',monospace;font-size:13.4px;line-height:15px;color:#1c1c1c;transform:scaleY(1.22);transform-origin:0 50%">1.275E-3</div>
<div class="t" style="left:200px;width:99px;text-align:right;top:686.6px;font-family:'Liberation Mono','DejaVu Sans Mono',monospace;font-size:13.4px;line-height:15px;color:#1c1c1c;transform:scaleY(1.22);transform-origin:0 50%">-448.442E-21</div>
<div class="a" style="left:930px;top:115px;width:3px;height:622px;background:#fcfcfc"></div>
<div class="a" style="left:933px;top:115px;width:1px;height:622px;background:#a8a8a8"></div>
<div class="a" style="left:934px;top:115px;width:18px;height:622px;background:linear-gradient(90deg,#f2f2f2,#e2e2e2 50%,#d2d2d2)"></div>
<div class="a" style="left:952px;top:115px;width:2px;height:622px;background:#fcfcfc"></div>
<div class="a" style="left:954px;top:115px;width:1px;height:622px;background:#9a9a9a"></div>
<svg class="a" style="left:936px;top:414px" width="14" height="24"><path d="M1 1V23L13 12Z" fill="#7878c0" stroke="#28286e" stroke-width="1.2" stroke-linejoin="round"/><path d="M2.500 4V20" stroke="#a0a0d8" stroke-width="1.500"/></svg>
<div class="a" style="left:955px;top:115px;width:229px;height:622px;background:#e4e4e4"></div>
<div class="a" style="left:956px;top:116px;width:227px;height:61px;background:#e6e6e6;border-bottom:1px solid #9a9a9a;border-right:1px solid #9a9a9a;border-left:1px solid #f8f8f8"></div>
<div class="t" style="left:956px;top:119px;font-family:'DejaVu Sans Mono','Liberation Mono',monospace;font-weight:bold;font-size:15.45px;line-height:19px;text-align:center;width:227px;letter-spacing:0px">4_ISOLIN_NO_INFINITE :&nbsp;</div>
<div class="t" style="left:956px;top:138px;font-family:'DejaVu Sans Mono','Liberation Mono',monospace;font-weight:bold;font-size:15.45px;line-height:19px;text-align:center;width:227px;letter-spacing:0px">Vector potential An /&nbsp;</div>
<div class="t" style="left:956px;top:158px;font-family:'DejaVu Sans Mono','Liberation Mono',monospace;font-weight:bold;font-size:15.45px;line-height:19px;text-align:center;width:227px;letter-spacing:0px">Vector potential in Wb/m</div>
<div class="a" style="left:957px;top:187px;width:224px;height:100px;border:1px solid #a8a8a8;box-shadow:1px 1px 0 #fff, inset 1px 1px 0 #fff"></div>
<div class="a" style="left:963px;top:179px;width:125px;height:16px;background:#e4e4e4"></div>
<div class="t" style="left:965px;top:179px;color:#666;font-weight:bold;font-size:13px;line-height:16px;letter-spacing:-0.2px">Displayed values</div>
<div class="btn" style="left:961px;top:199px;width:215px;height:23px;"></div>
<div class="t" style="left:961px;top:204.5px;width:215px;text-align:center;letter-spacing:-0.1px">Default values</div>
<div class="a" style="left:961px;top:225px;width:215px;height:57px;border:1px solid #a8a8a8;box-shadow:inset 1px 1px 0 #fff"></div>
<div class="t" style="left:961px;top:233px;width:43px;text-align:right;letter-spacing:0.4px">Max</div>
<div class="fld" style="left:1005px;top:227px;width:133px;height:25px;"></div>
<div class="t" style="left:1005px;top:233px;width:127px;text-align:right;letter-spacing:0.5px">75.212983E-3</div>
<div class="a" style="left:1138px;top:227px;width:18px;height:25px;border:1px solid #a8a8a8;background:linear-gradient(#f4f4f4,#dcdcdc)"></div>
<svg class="a" style="left:1144px;top:232px" width="8" height="16"><path d="M0 4.5L4 0.5L8 4.5Z M0 11.5L4 15.5L8 11.5Z" fill="#000"/></svg>
<div class="t" style="left:961px;top:261px;width:43px;text-align:right;letter-spacing:0.4px">Min</div>
<div class="fld" style="left:1005px;top:255px;width:133px;height:25px;"></div>
<div class="t" style="left:1005px;top:261px;width:127px;text-align:right;letter-spacing:0.5px">-448.44174E-21</div>
<div class="a" style="left:1138px;top:255px;width:18px;height:25px;border:1px solid #a8a8a8;background:linear-gradient(#f4f4f4,#dcdcdc)"></div>
<svg class="a" style="left:1144px;top:260px" width="8" height="16"><path d="M0 4.5L4 0.5L8 4.5Z M0 11.5L4 15.5L8 11.5Z" fill="#000"/></svg>
<div class="a" style="left:1158px;top:226px;width:18px;height:55px;border-left:1px solid #a8a8a8;background:linear-gradient(90deg,#f0f0f0,#d8d8d8)"></div>
<svg class="a" style="left:1160px;top:233px" width="15" height="42"><path d="M0 9L7.5 1L15 9Z M0 31L7.5 39L15 31Z" fill="#000"/></svg>
<div class="a" style="left:957px;top:299px;width:224px;height:84px;border:1px solid #a8a8a8;box-shadow:1px 1px 0 #fff, inset 1px 1px 0 #fff"></div>
<div class="a" style="left:963px;top:290px;width:92px;height:16px;background:#e4e4e4"></div>
<div class="t" style="left:965px;top:290px;color:#666;font-weight:bold;font-size:13px;line-height:16px;letter-spacing:-0.2px">Colour scale</div>
<div class="btn" style="left:961px;top:309px;width:215px;height:22px;"></div>
<div class="t" style="left:966px;top:313px;letter-spacing:0.2px">Flux colour scale</div>
<svg class="a" style="left:1161px;top:318px" width="10" height="6"><path d="M0 0H10L5 5.5Z" fill="#000"/></svg>
<div class="a" style="left:969px;top:339px;width:193px;height:6px;border:1px solid #9a9a9a;background:#eee;box-shadow:1px 1px 0 #fff"></div>
<svg class="a" style="left:1160px;top:332px" width="18" height="19" viewBox="0 0 18 19"><path d="M1.5 1.5H16.5V10L9 17.5L1.5 10Z" fill="#f4f4f4" stroke="#555" stroke-width="1"/><path d="M4 4h1v1h-1zM6 4h1v1h-1zM8 4h1v1h-1zM10 4h1v1h-1zM12 4h1v1h-1zM5 6h1v1h-1zM7 6h1v1h-1zM9 6h1v1h-1zM11 6h1v1h-1zM4 8h1v1h-1zM6 8h1v1h-1zM8 8h1v1h-1zM10 8h1v1h-1zM12 8h1v1h-1z" fill="#888"/></svg>
<div class="a" style="left:969px;top:355px;width:201px;height:6px;background:repeating-linear-gradient(90deg,#ccd6ea 0 1.4px,transparent 1.4px 3.45px)"></div>
<div class="t" style="left:966px;top:364px;letter-spacing:0.4px">2</div>
<div class="t" style="left:989px;top:364px;letter-spacing:0.4px">10</div>
<div class="t" style="left:1024px;top:364px;letter-spacing:0.4px">20</div>
<div class="t" style="left:1058px;top:364px;letter-spacing:0.4px">30</div>
<div class="t" style="left:1092px;top:364px;letter-spacing:0.4px">40</div>
<div class="t" style="left:1126px;top:364px;letter-spacing:0.4px">50</div>
<div class="t" style="left:1160px;top:364px;letter-spacing:0.4px">60</div>
<div class="btn" style="left:955px;top:687px;width:227px;height:22px;"></div>
<div class="t" style="left:955px;top:691px;width:227px;text-align:center;letter-spacing:0.05px">Save properties</div>
<div class="btn" style="left:955px;top:712px;width:227px;height:23px;"></div>
<div class="t" style="left:955px;top:716px;width:227px;text-align:center;letter-spacing:0.05px">Load properties</div>
<div class="a" style="left:186px;top:708px;width:745px;height:2px;background:#fafafa"></div>
<div class="a" style="left:187px;top:712px;width:143px;height:26px;border:1px solid #9a9a9a;border-right-color:#fff;border-bottom-color:#fff;background:#e6e6e6"></div>
<div class="a" style="left:331px;top:712px;width:576px;height:26px;border:1px solid #9a9a9a;border-right-color:#fff;border-bottom-color:#fff;background:#e6e6e6"></div>
<div class="a" style="left:908px;top:712px;width:24px;height:24px;border:1px solid #b0b0b0;background:#e6e6e6"><div class="a" style="left:8px;top:4px;width:11px;height:13px;background:linear-gradient(135deg,#eef 0%,#c8d8f8 100%);border:1px solid #b8c4e0"></div></div>
</body></html>
